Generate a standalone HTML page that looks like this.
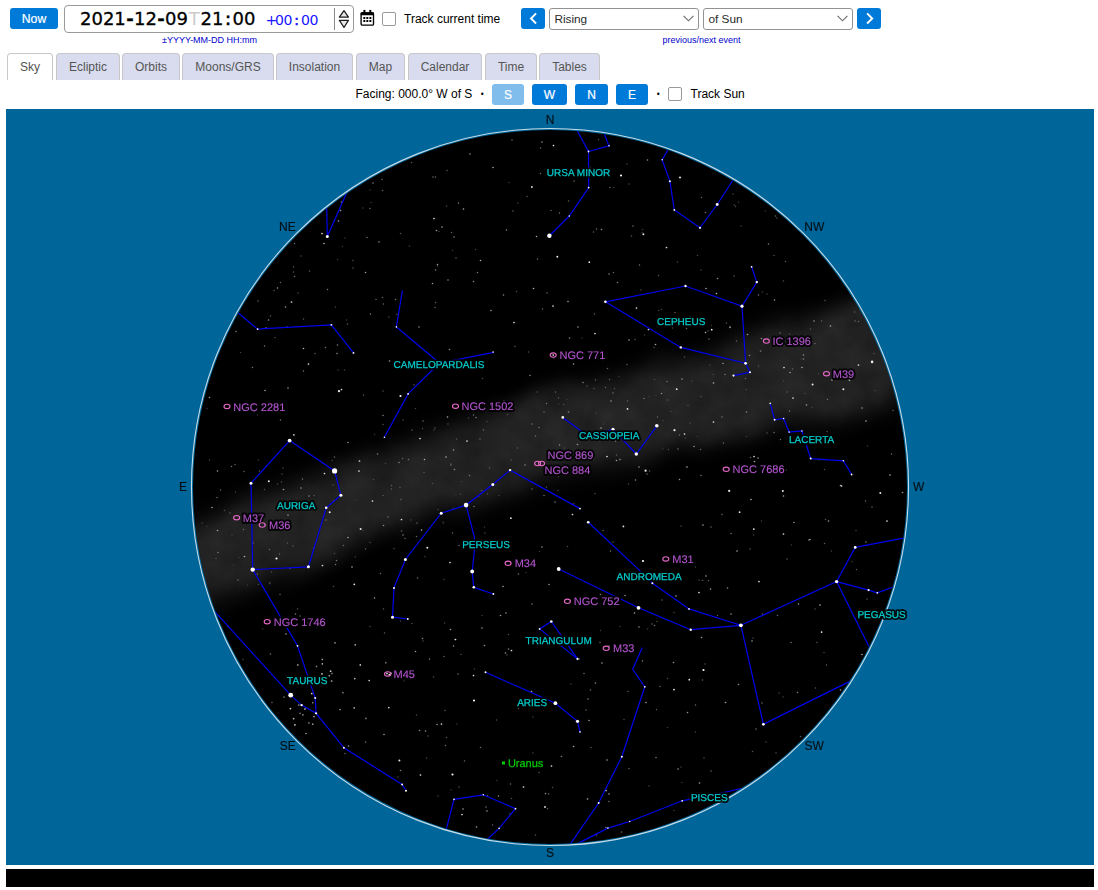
<!DOCTYPE html>
<html lang="en"><head><meta charset="utf-8"><title>Sky View Café</title>
<style>
html,body{margin:0;padding:0;background:#fff;}
body{width:1098px;height:890px;position:relative;overflow:hidden;font-family:"Liberation Sans",sans-serif;font-size:12px;color:#000;}
.abs{position:absolute;white-space:nowrap;}
.btn{position:absolute;background:#007ad9;color:#fff;font-weight:normal;font-size:12px;-webkit-text-stroke:0.2px #fff;border-radius:3px;text-align:center;box-sizing:border-box;}
.tab{position:absolute;top:53px;height:27px;box-sizing:border-box;border:1px solid #c8c8c8;border-bottom:none;border-radius:4px 4px 0 0;background:#d8dcee;color:#555;text-align:center;line-height:26px;font-size:12px;}
.tab.sel{background:#fff;color:#555;}
.cb{position:absolute;width:13.8px;height:13.8px;box-sizing:border-box;border:1.2px solid #999;border-radius:2px;background:#fff;}
.sel1{position:absolute;top:8px;height:22px;box-sizing:border-box;border:1px solid #929292;border-radius:3px;background:#fff;font-size:11.8px;line-height:21px;padding-left:4.4px;color:#2a2a2a;}
.cap{position:absolute;font-size:9px;color:#0000cc;white-space:nowrap;line-height:10px;}
.dt{position:absolute;left:64px;top:5px;width:290px;height:28px;box-sizing:border-box;border:1px solid #999;border-radius:4px;background:#fff;}
.hy{display:inline-block;width:0.454em;text-align:center;}
</style></head><body>
<div class="btn" style="left:10px;top:8px;width:48px;height:21px;line-height:22.5px;font-size:12.2px;">Now</div>
<div class="dt" id="dt">
<div class="abs" id="d1" style="left:15px;top:2px;font-family:'DejaVu Sans',sans-serif;font-size:18px;line-height:22px;color:#000;-webkit-text-stroke:0.3px #000;">2021<span class="hy" style="font-weight:bold">-</span>12<span class="hy" style="font-weight:bold">-</span>09<span class="hy" style="color:#ccc;width:12.6px;-webkit-text-stroke:0">T</span>21<span class="hy" style="width:9px;-webkit-text-stroke:0.7px #000">:</span>00</div>
<div class="abs" id="d2" style="left:200.6px;top:3.5px;font-family:'DejaVu Sans',sans-serif;font-size:14px;line-height:20px;color:#1515ff;letter-spacing:-0.3px"><span class="hy" style="width:9.4px">+</span>00<span class="hy" style="width:8.7px;-webkit-text-stroke:0.6px #1515ff">:</span>00</div>
<div class="abs" style="left:269px;top:2px;width:1px;height:22px;background:#888;"></div>
<svg class="abs" style="left:272px;top:2px" width="16" height="24" viewBox="337 8 16 24"><path d="M344 10.7 L348.4 17.2 H339.4 Z" fill="#e6e6e6" stroke="#1a1a1a" stroke-width="1.25" stroke-linejoin="round"/><path d="M344 27.5 L348.4 20.4 H339.4 Z" fill="#e6e6e6" stroke="#1a1a1a" stroke-width="1.25" stroke-linejoin="round"/></svg>
</div>
<div class="cap" style="left:162px;top:35px;">±YYYY-MM-DD HH:mm</div>
<svg class="abs" style="left:360px;top:9px" width="15" height="18" viewBox="0 0 15 18"><rect x="1.1" y="3.8" width="12.4" height="12.4" rx="1.3" fill="#fff" stroke="#000" stroke-width="1.35"/><rect x="0.6" y="3.2" width="13.4" height="3" rx="0.8" fill="#000"/><rect x="3.4" y="0.9" width="2" height="3" fill="#000"/><rect x="9.3" y="0.9" width="2" height="3" fill="#000"/><g fill="#000"><rect x="3.3" y="7.9" width="2" height="2.1" rx="0.5"/><rect x="6.3" y="7.9" width="2" height="2.1" rx="0.5"/><rect x="9.4" y="7.9" width="2" height="2.1" rx="0.5"/><rect x="3.3" y="10.9" width="2" height="2.1" rx="0.5"/><rect x="6.3" y="10.9" width="2" height="2.1" rx="0.5"/><rect x="9.4" y="10.9" width="2" height="2.1" rx="0.5"/></g></svg>
<div class="cb" style="left:382.1px;top:12.1px;"></div>
<div class="abs" style="left:404px;top:12px;line-height:14px;">Track current time</div>
<div class="btn" style="left:521px;top:8px;width:24px;height:21px;"><svg width="24" height="21" viewBox="0 0 24 21"><path d="M15.1 5.4 L10 10.45 L15.1 15.5" fill="none" stroke="#fff" stroke-width="1.9" stroke-linecap="butt" stroke-linejoin="miter"/></svg></div>
<div class="sel1" style="left:549px;width:150px;">Rising<svg class="abs" style="right:3.7px;top:6px" width="11" height="7" viewBox="0 0 11 7"><path d="M0.6 0.8 L5.5 5.8 L10.4 0.8" fill="none" stroke="#6a6a6a" stroke-width="1.1"/></svg></div>
<div class="sel1" style="left:703px;width:150px;">of Sun<svg class="abs" style="right:3.7px;top:6px" width="11" height="7" viewBox="0 0 11 7"><path d="M0.6 0.8 L5.5 5.8 L10.4 0.8" fill="none" stroke="#6a6a6a" stroke-width="1.1"/></svg></div>
<div class="btn" style="left:857px;top:8px;width:24px;height:21px;"><svg width="24" height="21" viewBox="0 0 24 21"><path d="M10.1 5.4 L15.2 10.45 L10.1 15.5" fill="none" stroke="#fff" stroke-width="1.9" stroke-linecap="butt" stroke-linejoin="miter"/></svg></div>
<div class="cap" style="left:662.5px;top:35px;">previous/next event</div>

<div class="tab sel" style="left:7px;width:46px;">Sky</div>
<div class="tab" style="left:56px;width:64px;">Ecliptic</div>
<div class="tab" style="left:122px;width:58px;">Orbits</div>
<div class="tab" style="left:182px;width:92px;">Moons/GRS</div>
<div class="tab" style="left:276px;width:77px;">Insolation</div>
<div class="tab" style="left:356px;width:49px;">Map</div>
<div class="tab" style="left:408px;width:74px;">Calendar</div>
<div class="tab" style="left:485px;width:52px;">Time</div>
<div class="tab" style="left:539px;width:61px;">Tables</div>

<div class="abs" style="left:355.5px;top:87px;line-height:14px;">Facing: 000.0° W of S</div>
<div class="abs" style="left:480.8px;top:87px;line-height:14px;font-size:8.5px;">•</div>
<div class="btn" style="left:492px;top:84px;width:32px;height:20.5px;line-height:22.5px;background:#80bcec;">S</div>
<div class="btn" style="left:532px;top:84px;width:35px;height:20.5px;line-height:22.5px;">W</div>
<div class="btn" style="left:575px;top:84px;width:33px;height:20.5px;line-height:22.5px;">N</div>
<div class="btn" style="left:616px;top:84px;width:32px;height:20.5px;line-height:22.5px;">E</div>
<div class="abs" style="left:656.8px;top:87px;line-height:14px;font-size:8.5px;">•</div>
<div class="cb" style="left:667.9px;top:87.1px;"></div>
<div class="abs" style="left:690.5px;top:87px;line-height:14px;">Track Sun</div>

<svg width="1088" height="756" viewBox="6 109 1088 756" style="position:absolute;left:6px;top:109px;display:block;will-change:transform">
<defs><clipPath id="cc"><circle cx="550.0" cy="487.0" r="357.0"/></clipPath><filter id="mw" filterUnits="userSpaceOnUse" x="150" y="100" width="800" height="780" color-interpolation-filters="sRGB"><feGaussianBlur in="SourceGraphic" stdDeviation="11" result="b"/><feTurbulence type="fractalNoise" baseFrequency="0.012" numOctaves="2" seed="4" result="t"/><feDisplacementMap in="b" in2="t" scale="26" xChannelSelector="R" yChannelSelector="G" result="d"/><feTurbulence type="fractalNoise" baseFrequency="0.035" numOctaves="3" seed="5" result="n"/><feColorMatrix in="n" type="matrix" values="0 0 0 0 1  0 0 0 0 1  0 0 0 0 1  0.4 0 0 0 0.6" result="na"/><feComposite in="d" in2="na" operator="in"/></filter></defs>
<rect x="6" y="109" width="1088" height="756" fill="#006699"/>
<circle cx="550.0" cy="487.0" r="357.0" fill="#000"/>
<g clip-path="url(#cc)">
<g filter="url(#mw)" opacity="0.17"><polygon points="150,536 230,506.5 450,424 690,355 840,303.5 960,268 960,382 840,418 690,447.5 450,509 230,594 150,624" fill="#fff"/></g>
<circle cx="245" cy="513.5" r="0.75" fill="rgb(60,60,60)"/><circle cx="496.5" cy="720" r="0.75" fill="rgb(76,76,76)"/><circle cx="476.5" cy="827" r="0.8" fill="rgb(161,161,161)"/><circle cx="400.5" cy="233.5" r="0.75" fill="rgb(84,84,84)"/><circle cx="649" cy="396.5" r="0.75" fill="rgb(60,60,60)"/><circle cx="679.5" cy="435" r="0.75" fill="rgb(110,110,110)"/><circle cx="302.5" cy="479" r="0.75" fill="rgb(118,118,118)"/><circle cx="607" cy="456.5" r="0.85" fill="#ddd"/><circle cx="532" cy="604" r="0.8" fill="rgb(120,120,120)"/><circle cx="780" cy="333" r="0.75" fill="rgb(118,118,118)"/><circle cx="209.5" cy="460" r="0.75" fill="rgb(66,66,66)"/><circle cx="285.5" cy="307" r="0.8" fill="rgb(164,164,164)"/><circle cx="810.5" cy="329" r="0.75" fill="rgb(89,89,89)"/><circle cx="301" cy="256" r="0.75" fill="rgb(77,77,77)"/><circle cx="539.5" cy="551.5" r="0.75" fill="rgb(55,55,55)"/><circle cx="634.5" cy="613" r="0.8" fill="rgb(171,171,171)"/><circle cx="473.5" cy="415" r="0.75" fill="rgb(115,115,115)"/><circle cx="342.5" cy="246.5" r="0.75" fill="rgb(59,59,59)"/><circle cx="265" cy="390.5" r="0.8" fill="rgb(165,165,165)"/><circle cx="631.5" cy="236" r="0.75" fill="rgb(88,88,88)"/><circle cx="872" cy="507" r="0.75" fill="rgb(106,106,106)"/><circle cx="212" cy="507.5" r="0.8" fill="rgb(162,162,162)"/><circle cx="690" cy="316.5" r="0.75" fill="rgb(70,70,70)"/><circle cx="355.5" cy="500" r="0.75" fill="rgb(57,57,57)"/><circle cx="875" cy="390.5" r="0.75" fill="rgb(76,76,76)"/><circle cx="476" cy="417.5" r="0.8" fill="rgb(126,126,126)"/><circle cx="443" cy="522" r="0.75" fill="rgb(56,56,56)"/><circle cx="783.5" cy="281" r="0.75" fill="rgb(82,82,82)"/><circle cx="365.5" cy="549" r="0.75" fill="rgb(94,94,94)"/><circle cx="446" cy="457" r="0.8" fill="rgb(173,173,173)"/><circle cx="573.5" cy="504" r="0.75" fill="rgb(96,96,96)"/><circle cx="711" cy="527" r="0.75" fill="rgb(104,104,104)"/><circle cx="590.5" cy="690" r="0.75" fill="rgb(108,108,108)"/><circle cx="509" cy="182.5" r="0.75" fill="rgb(61,61,61)"/><circle cx="435.5" cy="270" r="0.8" fill="rgb(125,125,125)"/><circle cx="207" cy="526.5" r="0.75" fill="rgb(56,56,56)"/><circle cx="268.5" cy="320" r="0.8" fill="rgb(140,140,140)"/><circle cx="600.5" cy="630.5" r="0.75" fill="rgb(60,60,60)"/><circle cx="684.5" cy="434" r="0.85" fill="#ddd"/><circle cx="646" cy="702.5" r="0.8" fill="rgb(160,160,160)"/><circle cx="855" cy="321" r="0.75" fill="rgb(105,105,105)"/><circle cx="363" cy="208" r="0.75" fill="rgb(59,59,59)"/><circle cx="337" cy="353.5" r="0.8" fill="rgb(135,135,135)"/><circle cx="400" cy="487.5" r="0.75" fill="rgb(87,87,87)"/><circle cx="789.5" cy="411" r="0.75" fill="rgb(120,120,120)"/><circle cx="482.5" cy="378.5" r="0.75" fill="rgb(67,67,67)"/><circle cx="243" cy="659.5" r="0.75" fill="rgb(70,70,70)"/><circle cx="815" cy="609" r="0.75" fill="rgb(78,78,78)"/><circle cx="402.5" cy="458.5" r="0.75" fill="rgb(97,97,97)"/><circle cx="887" cy="521" r="0.85" fill="#ddd"/><circle cx="414" cy="385" r="0.75" fill="rgb(91,91,91)"/><circle cx="532" cy="489" r="0.75" fill="rgb(102,102,102)"/><circle cx="257.5" cy="415" r="0.75" fill="rgb(57,57,57)"/><circle cx="704" cy="758" r="0.75" fill="rgb(85,85,85)"/><circle cx="710.5" cy="589" r="0.8" fill="rgb(155,155,155)"/><circle cx="681.5" cy="625.5" r="0.75" fill="rgb(57,57,57)"/><circle cx="288" cy="388" r="0.8" fill="rgb(155,155,155)"/><circle cx="679.5" cy="479.5" r="0.8" fill="rgb(145,145,145)"/><circle cx="373" cy="183" r="0.8" fill="rgb(127,127,127)"/><circle cx="546.5" cy="403.5" r="0.75" fill="rgb(119,119,119)"/><circle cx="598.5" cy="139.5" r="0.75" fill="rgb(80,80,80)"/><circle cx="401" cy="499.5" r="0.75" fill="rgb(99,99,99)"/><circle cx="514" cy="322.5" r="0.85" fill="#ddd"/><circle cx="343.5" cy="545.5" r="0.75" fill="rgb(104,104,104)"/><circle cx="540.5" cy="148" r="0.75" fill="rgb(101,101,101)"/><circle cx="515" cy="346.5" r="0.75" fill="rgb(87,87,87)"/><circle cx="419.5" cy="730.5" r="0.8" fill="rgb(133,133,133)"/><circle cx="400.5" cy="396" r="1.05" fill="#fff"/><circle cx="614.5" cy="388.5" r="0.75" fill="rgb(81,81,81)"/><circle cx="789.5" cy="334" r="0.75" fill="rgb(78,78,78)"/><circle cx="383" cy="495.5" r="0.75" fill="rgb(90,90,90)"/><circle cx="530" cy="375.5" r="0.8" fill="rgb(130,130,130)"/><circle cx="475.5" cy="249.5" r="0.75" fill="rgb(74,74,74)"/><circle cx="840.5" cy="485.5" r="0.8" fill="rgb(173,173,173)"/><circle cx="293.5" cy="267" r="0.75" fill="rgb(87,87,87)"/><circle cx="258" cy="301" r="0.75" fill="rgb(109,109,109)"/><circle cx="826.5" cy="665" r="0.75" fill="rgb(94,94,94)"/><circle cx="567" cy="399.5" r="0.75" fill="rgb(60,60,60)"/><circle cx="283.5" cy="489.5" r="0.8" fill="rgb(162,162,162)"/><circle cx="347.5" cy="324" r="0.75" fill="rgb(92,92,92)"/><circle cx="370" cy="208.5" r="0.75" fill="rgb(104,104,104)"/><circle cx="654" cy="347.5" r="0.75" fill="rgb(78,78,78)"/><circle cx="647.5" cy="629" r="0.75" fill="rgb(61,61,61)"/><circle cx="567.5" cy="546.5" r="0.75" fill="rgb(76,76,76)"/><circle cx="408.5" cy="459.5" r="0.75" fill="rgb(116,116,116)"/><circle cx="824.5" cy="469.5" r="0.75" fill="rgb(78,78,78)"/><circle cx="434" cy="430" r="0.75" fill="rgb(73,73,73)"/><circle cx="416.5" cy="715" r="0.75" fill="rgb(76,76,76)"/><circle cx="736.5" cy="341" r="0.75" fill="rgb(102,102,102)"/><circle cx="327.5" cy="289.5" r="0.75" fill="rgb(118,118,118)"/><circle cx="858.5" cy="365" r="0.85" fill="#ddd"/><circle cx="667.5" cy="400" r="0.75" fill="rgb(86,86,86)"/><circle cx="780.5" cy="439.5" r="0.75" fill="rgb(99,99,99)"/><circle cx="459" cy="787" r="0.75" fill="rgb(89,89,89)"/><circle cx="419" cy="327" r="0.8" fill="rgb(134,134,134)"/><circle cx="545.5" cy="793.5" r="0.8" fill="rgb(146,146,146)"/><circle cx="627" cy="364.5" r="0.75" fill="rgb(89,89,89)"/><circle cx="382.5" cy="190.5" r="0.75" fill="rgb(102,102,102)"/><circle cx="700.5" cy="449.5" r="0.75" fill="rgb(94,94,94)"/><circle cx="798.5" cy="604" r="0.8" fill="rgb(156,156,156)"/><circle cx="403" cy="535" r="0.8" fill="rgb(129,129,129)"/><circle cx="335.5" cy="307" r="0.75" fill="rgb(69,69,69)"/><circle cx="824.5" cy="543.5" r="0.75" fill="rgb(92,92,92)"/><circle cx="902.5" cy="492.5" r="0.8" fill="rgb(148,148,148)"/><circle cx="609" cy="794" r="0.8" fill="rgb(163,163,163)"/><circle cx="619.5" cy="573.5" r="0.75" fill="rgb(90,90,90)"/><circle cx="294.5" cy="276.5" r="0.75" fill="rgb(111,111,111)"/><circle cx="658.5" cy="275.5" r="0.75" fill="rgb(86,86,86)"/><circle cx="677.5" cy="262" r="0.75" fill="rgb(74,74,74)"/><circle cx="761.5" cy="521" r="0.75" fill="rgb(64,64,64)"/><circle cx="690" cy="423" r="0.75" fill="rgb(84,84,84)"/><circle cx="874" cy="353.5" r="0.75" fill="rgb(88,88,88)"/><circle cx="257.5" cy="574" r="0.75" fill="rgb(102,102,102)"/><circle cx="890" cy="475" r="0.8" fill="rgb(178,178,178)"/><circle cx="785.5" cy="261.5" r="0.75" fill="rgb(92,92,92)"/><circle cx="563.5" cy="404.5" r="0.75" fill="rgb(78,78,78)"/><circle cx="711" cy="771" r="0.75" fill="rgb(108,108,108)"/><circle cx="412" cy="430" r="0.75" fill="rgb(95,95,95)"/><circle cx="663" cy="449" r="0.75" fill="rgb(57,57,57)"/><circle cx="635.5" cy="480" r="0.8" fill="rgb(136,136,136)"/><circle cx="750.5" cy="457.5" r="0.75" fill="rgb(99,99,99)"/><circle cx="463" cy="809" r="0.8" fill="rgb(160,160,160)"/><circle cx="552.5" cy="787.5" r="0.75" fill="rgb(79,79,79)"/><circle cx="554" cy="358" r="0.75" fill="rgb(72,72,72)"/><circle cx="678" cy="769" r="0.8" fill="rgb(142,142,142)"/><circle cx="275.5" cy="509.5" r="0.75" fill="rgb(89,89,89)"/><circle cx="474" cy="700.5" r="1.05" fill="#fff"/><circle cx="605.5" cy="387.5" r="0.75" fill="rgb(97,97,97)"/><circle cx="633.5" cy="439" r="0.8" fill="rgb(170,170,170)"/><circle cx="446.5" cy="206" r="0.75" fill="rgb(76,76,76)"/><circle cx="610.5" cy="551" r="0.75" fill="rgb(114,114,114)"/><circle cx="367" cy="237.5" r="0.75" fill="rgb(115,115,115)"/><circle cx="815.5" cy="688" r="0.75" fill="rgb(80,80,80)"/><circle cx="595.5" cy="380" r="0.75" fill="rgb(97,97,97)"/><circle cx="862" cy="654.5" r="0.8" fill="rgb(172,172,172)"/><circle cx="224.5" cy="510.5" r="0.75" fill="rgb(77,77,77)"/><circle cx="202" cy="523" r="0.75" fill="rgb(68,68,68)"/><circle cx="335.5" cy="564.5" r="0.75" fill="rgb(115,115,115)"/><circle cx="774" cy="255.5" r="0.75" fill="rgb(83,83,83)"/><circle cx="752" cy="641" r="0.8" fill="rgb(157,157,157)"/><circle cx="516.5" cy="291.5" r="0.75" fill="rgb(77,77,77)"/><circle cx="383.5" cy="525.5" r="0.8" fill="rgb(142,142,142)"/><circle cx="426.5" cy="758" r="0.75" fill="rgb(77,77,77)"/><circle cx="600" cy="350.5" r="0.75" fill="rgb(114,114,114)"/><circle cx="439" cy="231.5" r="0.75" fill="rgb(58,58,58)"/><circle cx="340.5" cy="210.5" r="0.8" fill="rgb(158,158,158)"/><circle cx="644.5" cy="335" r="0.75" fill="rgb(64,64,64)"/><circle cx="734" cy="276" r="0.75" fill="rgb(95,95,95)"/><circle cx="745.5" cy="378.5" r="0.75" fill="rgb(106,106,106)"/><circle cx="348.5" cy="746" r="0.8" fill="rgb(151,151,151)"/><circle cx="441.5" cy="724" r="0.85" fill="#ddd"/><circle cx="447.5" cy="417" r="0.8" fill="rgb(169,169,169)"/><circle cx="464.5" cy="761" r="0.75" fill="rgb(98,98,98)"/><circle cx="654.5" cy="379.5" r="0.75" fill="rgb(69,69,69)"/><circle cx="825" cy="300.5" r="0.75" fill="rgb(83,83,83)"/><circle cx="695.5" cy="732" r="0.75" fill="rgb(69,69,69)"/><circle cx="308.5" cy="364" r="0.85" fill="#ddd"/><circle cx="333.5" cy="586.5" r="0.75" fill="rgb(74,74,74)"/><circle cx="470" cy="154" r="0.8" fill="rgb(143,143,143)"/><circle cx="702.5" cy="580.5" r="0.75" fill="rgb(95,95,95)"/><circle cx="518.5" cy="574" r="0.75" fill="rgb(119,119,119)"/><circle cx="660" cy="686.5" r="0.75" fill="rgb(101,101,101)"/><circle cx="865.5" cy="501" r="0.75" fill="rgb(109,109,109)"/><circle cx="486" cy="807" r="0.75" fill="rgb(120,120,120)"/><circle cx="473.5" cy="675.5" r="0.85" fill="#ddd"/><circle cx="447" cy="170.5" r="0.75" fill="rgb(92,92,92)"/><circle cx="692" cy="381" r="0.75" fill="rgb(76,76,76)"/><circle cx="473.5" cy="281.5" r="0.8" fill="rgb(139,139,139)"/><circle cx="776.5" cy="464.5" r="0.75" fill="rgb(107,107,107)"/><circle cx="446.5" cy="737.5" r="0.75" fill="rgb(90,90,90)"/><circle cx="374.5" cy="434.5" r="0.75" fill="rgb(55,55,55)"/><circle cx="708" cy="331" r="0.75" fill="rgb(83,83,83)"/><circle cx="535.5" cy="436" r="0.75" fill="rgb(117,117,117)"/><circle cx="840.5" cy="690" r="0.8" fill="rgb(154,154,154)"/><circle cx="661.5" cy="309.5" r="0.75" fill="rgb(68,68,68)"/><circle cx="723.5" cy="443" r="0.75" fill="rgb(107,107,107)"/><circle cx="382.5" cy="297.5" r="0.75" fill="rgb(101,101,101)"/><circle cx="235" cy="464.5" r="0.75" fill="rgb(101,101,101)"/><circle cx="793" cy="398" r="0.85" fill="#ddd"/><circle cx="247.5" cy="585" r="0.75" fill="rgb(57,57,57)"/><circle cx="558.5" cy="476.5" r="0.75" fill="rgb(58,58,58)"/><circle cx="706" cy="576" r="0.8" fill="rgb(162,162,162)"/><circle cx="454.5" cy="469.5" r="0.8" fill="rgb(138,138,138)"/><circle cx="589" cy="720.5" r="0.8" fill="rgb(153,153,153)"/><circle cx="481.5" cy="490.5" r="0.75" fill="rgb(103,103,103)"/><circle cx="758.5" cy="366" r="0.75" fill="rgb(83,83,83)"/><circle cx="825.5" cy="519.5" r="0.75" fill="rgb(83,83,83)"/><circle cx="738.5" cy="202" r="0.75" fill="rgb(58,58,58)"/><circle cx="661.5" cy="393.5" r="0.8" fill="rgb(142,142,142)"/><circle cx="594.5" cy="314" r="0.75" fill="rgb(95,95,95)"/><circle cx="420" cy="438.5" r="0.85" fill="#ddd"/><circle cx="232" cy="535" r="0.75" fill="rgb(66,66,66)"/><circle cx="512" cy="140" r="0.75" fill="rgb(111,111,111)"/><circle cx="532" cy="424" r="0.75" fill="rgb(116,116,116)"/><circle cx="345" cy="238" r="0.75" fill="rgb(55,55,55)"/><circle cx="415.5" cy="651.5" r="0.8" fill="rgb(161,161,161)"/><circle cx="540.5" cy="173.5" r="0.75" fill="rgb(109,109,109)"/><circle cx="506" cy="613" r="0.8" fill="rgb(145,145,145)"/><circle cx="491" cy="405.5" r="0.85" fill="#ddd"/><circle cx="753.5" cy="535" r="0.75" fill="rgb(60,60,60)"/><circle cx="784" cy="367.5" r="0.85" fill="#ddd"/><circle cx="787" cy="559" r="0.75" fill="rgb(95,95,95)"/><circle cx="827.5" cy="399.5" r="0.75" fill="rgb(112,112,112)"/><circle cx="682" cy="782.5" r="0.75" fill="rgb(63,63,63)"/><circle cx="588" cy="699" r="0.8" fill="rgb(133,133,133)"/><circle cx="758" cy="458" r="0.8" fill="rgb(147,147,147)"/><circle cx="566.5" cy="470" r="0.75" fill="rgb(72,72,72)"/><circle cx="452.5" cy="533" r="0.75" fill="rgb(104,104,104)"/><circle cx="269.5" cy="582.5" r="0.75" fill="rgb(69,69,69)"/><circle cx="619" cy="376.5" r="0.75" fill="rgb(56,56,56)"/><circle cx="337.5" cy="259.5" r="0.75" fill="rgb(59,59,59)"/><circle cx="239" cy="557.5" r="0.75" fill="rgb(66,66,66)"/><circle cx="671" cy="411.5" r="0.75" fill="rgb(70,70,70)"/><circle cx="734.5" cy="205" r="0.75" fill="rgb(79,79,79)"/><circle cx="282" cy="474" r="0.75" fill="rgb(77,77,77)"/><circle cx="295.5" cy="614" r="0.8" fill="rgb(124,124,124)"/><circle cx="642" cy="232.5" r="0.75" fill="rgb(60,60,60)"/><circle cx="703" cy="525" r="0.8" fill="rgb(164,164,164)"/><circle cx="383" cy="424.5" r="0.75" fill="rgb(80,80,80)"/><circle cx="792.5" cy="369" r="0.75" fill="rgb(101,101,101)"/><circle cx="420.5" cy="775" r="0.85" fill="#ddd"/><circle cx="397" cy="314.5" r="0.75" fill="rgb(89,89,89)"/><circle cx="400.5" cy="770.5" r="0.8" fill="rgb(126,126,126)"/><circle cx="436.5" cy="230.5" r="0.8" fill="rgb(154,154,154)"/><circle cx="601.5" cy="229.5" r="0.8" fill="rgb(138,138,138)"/><circle cx="701" cy="270" r="0.75" fill="rgb(63,63,63)"/><circle cx="628.5" cy="484" r="0.75" fill="rgb(74,74,74)"/><circle cx="609" cy="274" r="0.8" fill="rgb(128,128,128)"/><circle cx="484.5" cy="645.5" r="0.8" fill="rgb(148,148,148)"/><circle cx="533" cy="753" r="0.75" fill="rgb(72,72,72)"/><circle cx="787" cy="392" r="0.75" fill="rgb(90,90,90)"/><circle cx="564" cy="448" r="0.75" fill="rgb(66,66,66)"/><circle cx="422.5" cy="638.5" r="0.8" fill="rgb(133,133,133)"/><circle cx="572.5" cy="514.5" r="0.85" fill="#ddd"/><circle cx="353" cy="260.5" r="0.75" fill="rgb(78,78,78)"/><circle cx="262.5" cy="629" r="0.75" fill="rgb(56,56,56)"/><circle cx="281.5" cy="482" r="0.75" fill="rgb(81,81,81)"/><circle cx="280.5" cy="420" r="0.75" fill="rgb(111,111,111)"/><circle cx="602" cy="663" r="0.8" fill="rgb(152,152,152)"/><circle cx="862" cy="408" r="0.8" fill="rgb(156,156,156)"/><circle cx="568.5" cy="412" r="0.8" fill="rgb(139,139,139)"/><circle cx="435.5" cy="302.5" r="0.75" fill="rgb(96,96,96)"/><circle cx="453.5" cy="509" r="0.75" fill="rgb(96,96,96)"/><circle cx="553.5" cy="145.5" r="0.85" fill="#ddd"/><circle cx="388" cy="517" r="0.75" fill="rgb(114,114,114)"/><circle cx="372.5" cy="501" r="0.85" fill="#ddd"/><circle cx="279.5" cy="554" r="0.75" fill="rgb(103,103,103)"/><circle cx="385.5" cy="463.5" r="0.75" fill="rgb(69,69,69)"/><circle cx="403" cy="420" r="0.75" fill="rgb(78,78,78)"/><circle cx="256.5" cy="520" r="0.75" fill="rgb(112,112,112)"/><circle cx="600.5" cy="594.5" r="0.8" fill="rgb(122,122,122)"/><circle cx="528.5" cy="352" r="0.75" fill="rgb(76,76,76)"/><circle cx="559" cy="404" r="0.75" fill="rgb(56,56,56)"/><circle cx="445.5" cy="745.5" r="0.75" fill="rgb(107,107,107)"/><circle cx="404" cy="681" r="0.75" fill="rgb(61,61,61)"/><circle cx="815" cy="444" r="0.75" fill="rgb(91,91,91)"/><circle cx="507" cy="655" r="0.75" fill="rgb(76,76,76)"/><circle cx="303.5" cy="371" r="0.75" fill="rgb(119,119,119)"/><circle cx="699.5" cy="783" r="0.8" fill="rgb(164,164,164)"/><circle cx="601" cy="428" r="0.8" fill="rgb(164,164,164)"/><circle cx="627.5" cy="401" r="0.75" fill="rgb(98,98,98)"/><circle cx="709" cy="339" r="0.75" fill="rgb(107,107,107)"/><circle cx="325.5" cy="347.5" r="0.75" fill="rgb(109,109,109)"/><circle cx="497" cy="780.5" r="0.75" fill="rgb(59,59,59)"/><circle cx="568.5" cy="201" r="0.75" fill="rgb(93,93,93)"/><circle cx="438" cy="509.5" r="0.75" fill="rgb(71,71,71)"/><circle cx="783.5" cy="496" r="0.8" fill="rgb(170,170,170)"/><circle cx="827" cy="431.5" r="0.75" fill="rgb(82,82,82)"/><circle cx="558" cy="490.5" r="0.75" fill="rgb(72,72,72)"/><circle cx="643" cy="561" r="1.05" fill="#fff"/><circle cx="647.5" cy="160" r="0.8" fill="rgb(142,142,142)"/><circle cx="412" cy="623.5" r="0.75" fill="rgb(83,83,83)"/><circle cx="333" cy="485" r="0.75" fill="rgb(80,80,80)"/><circle cx="603.5" cy="424" r="0.75" fill="rgb(69,69,69)"/><circle cx="735.5" cy="206.5" r="0.75" fill="rgb(71,71,71)"/><circle cx="423" cy="641" r="0.75" fill="rgb(71,71,71)"/><circle cx="609.5" cy="379.5" r="0.75" fill="rgb(91,91,91)"/><circle cx="636.5" cy="308" r="0.85" fill="#ddd"/><circle cx="803.5" cy="355" r="0.8" fill="rgb(150,150,150)"/><circle cx="547.5" cy="808.5" r="0.75" fill="rgb(92,92,92)"/><circle cx="706" cy="288.5" r="0.8" fill="rgb(165,165,165)"/><circle cx="539.5" cy="696.5" r="0.75" fill="rgb(71,71,71)"/><circle cx="401.5" cy="531" r="0.75" fill="rgb(105,105,105)"/><circle cx="468.5" cy="418" r="0.75" fill="rgb(66,66,66)"/><circle cx="783.5" cy="381" r="0.75" fill="rgb(73,73,73)"/><circle cx="395.5" cy="299.5" r="0.75" fill="rgb(118,118,118)"/><circle cx="768.5" cy="244" r="0.8" fill="rgb(125,125,125)"/><circle cx="462" cy="814.5" r="0.85" fill="#ddd"/><circle cx="286" cy="634" r="0.8" fill="rgb(171,171,171)"/><circle cx="613" cy="393" r="0.75" fill="rgb(112,112,112)"/><circle cx="345" cy="753.5" r="0.75" fill="rgb(103,103,103)"/><circle cx="415.5" cy="408.5" r="0.75" fill="rgb(71,71,71)"/><circle cx="801" cy="359" r="0.75" fill="rgb(65,65,65)"/><circle cx="594" cy="388.5" r="0.75" fill="rgb(83,83,83)"/><circle cx="240.5" cy="352.5" r="0.75" fill="rgb(66,66,66)"/><circle cx="705.5" cy="332.5" r="0.8" fill="rgb(174,174,174)"/><circle cx="287" cy="327" r="0.75" fill="rgb(119,119,119)"/><circle cx="667" cy="381.5" r="0.75" fill="rgb(117,117,117)"/><circle cx="444" cy="579.5" r="0.75" fill="rgb(65,65,65)"/><circle cx="309.5" cy="271" r="0.75" fill="rgb(91,91,91)"/><circle cx="600" cy="642.5" r="0.75" fill="rgb(96,96,96)"/><circle cx="682" cy="379" r="0.8" fill="rgb(154,154,154)"/><circle cx="747.5" cy="334.5" r="0.8" fill="rgb(160,160,160)"/><circle cx="627" cy="164" r="0.75" fill="rgb(65,65,65)"/><circle cx="499" cy="495.5" r="0.75" fill="rgb(67,67,67)"/><circle cx="695.5" cy="705" r="0.75" fill="rgb(106,106,106)"/><circle cx="448" cy="424" r="0.75" fill="rgb(84,84,84)"/><circle cx="511.5" cy="798.5" r="0.75" fill="rgb(83,83,83)"/><circle cx="584" cy="673.5" r="0.75" fill="rgb(118,118,118)"/><circle cx="620" cy="459.5" r="0.8" fill="rgb(154,154,154)"/><circle cx="275" cy="337.5" r="0.75" fill="rgb(74,74,74)"/><circle cx="236" cy="331.5" r="0.8" fill="rgb(120,120,120)"/><circle cx="513" cy="211" r="0.75" fill="rgb(99,99,99)"/><circle cx="452.5" cy="250.5" r="0.75" fill="rgb(56,56,56)"/><circle cx="659" cy="310.5" r="0.75" fill="rgb(68,68,68)"/><circle cx="792" cy="342.5" r="0.75" fill="rgb(115,115,115)"/><circle cx="723" cy="363.5" r="0.8" fill="rgb(152,152,152)"/><circle cx="457" cy="724" r="0.75" fill="rgb(58,58,58)"/><circle cx="546.5" cy="487" r="0.75" fill="rgb(83,83,83)"/><circle cx="595.5" cy="379.5" r="0.75" fill="rgb(63,63,63)"/><circle cx="424.5" cy="459.5" r="0.8" fill="rgb(174,174,174)"/><circle cx="405" cy="538.5" r="0.75" fill="rgb(100,100,100)"/><circle cx="655.5" cy="344.5" r="0.8" fill="rgb(168,168,168)"/><circle cx="678" cy="449" r="0.75" fill="rgb(117,117,117)"/><circle cx="459" cy="545.5" r="0.75" fill="rgb(105,105,105)"/><circle cx="596" cy="413" r="0.75" fill="rgb(72,72,72)"/><circle cx="828.5" cy="521" r="0.8" fill="rgb(162,162,162)"/><circle cx="373.5" cy="479.5" r="0.75" fill="rgb(76,76,76)"/><circle cx="613.5" cy="187.5" r="0.75" fill="rgb(61,61,61)"/><circle cx="703.5" cy="670" r="1.05" fill="#fff"/><circle cx="595.5" cy="683" r="0.8" fill="rgb(139,139,139)"/><circle cx="617.5" cy="282.5" r="0.8" fill="rgb(121,121,121)"/><circle cx="725" cy="374.5" r="0.75" fill="rgb(119,119,119)"/><circle cx="675" cy="312.5" r="0.75" fill="rgb(97,97,97)"/><circle cx="791.5" cy="545" r="0.75" fill="rgb(56,56,56)"/><circle cx="272" cy="702.5" r="0.75" fill="rgb(107,107,107)"/><circle cx="400.5" cy="621" r="0.75" fill="rgb(68,68,68)"/><circle cx="301" cy="488" r="0.8" fill="rgb(146,146,146)"/><circle cx="777.5" cy="615.5" r="0.75" fill="rgb(100,100,100)"/><circle cx="306" cy="733.5" r="0.8" fill="rgb(164,164,164)"/><circle cx="629" cy="184" r="0.75" fill="rgb(75,75,75)"/><circle cx="831.5" cy="551" r="0.75" fill="rgb(71,71,71)"/><circle cx="451" cy="464" r="0.75" fill="rgb(91,91,91)"/><circle cx="607.5" cy="368.5" r="0.75" fill="rgb(98,98,98)"/><circle cx="297.5" cy="609" r="0.75" fill="rgb(80,80,80)"/><circle cx="217.5" cy="530.5" r="0.8" fill="rgb(164,164,164)"/><circle cx="443.5" cy="523" r="0.75" fill="rgb(60,60,60)"/><circle cx="537" cy="392" r="0.75" fill="rgb(77,77,77)"/><circle cx="442" cy="227" r="0.8" fill="rgb(164,164,164)"/><circle cx="517.5" cy="448" r="0.75" fill="rgb(83,83,83)"/><circle cx="587.5" cy="799" r="0.8" fill="rgb(177,177,177)"/><circle cx="610" cy="187.5" r="0.75" fill="rgb(110,110,110)"/><circle cx="746.5" cy="436.5" r="0.75" fill="rgb(61,61,61)"/><circle cx="539" cy="772.5" r="0.75" fill="rgb(79,79,79)"/><circle cx="384.5" cy="633" r="0.75" fill="rgb(92,92,92)"/><circle cx="336.5" cy="560.5" r="0.75" fill="rgb(116,116,116)"/><circle cx="818.5" cy="374" r="0.75" fill="rgb(72,72,72)"/><circle cx="482" cy="615.5" r="0.75" fill="rgb(60,60,60)"/><circle cx="432.5" cy="483.5" r="0.75" fill="rgb(79,79,79)"/><circle cx="596.5" cy="835" r="0.75" fill="rgb(113,113,113)"/><circle cx="710" cy="365" r="0.75" fill="rgb(69,69,69)"/><circle cx="774" cy="432.5" r="0.75" fill="rgb(110,110,110)"/><circle cx="429.5" cy="659" r="0.8" fill="rgb(122,122,122)"/><circle cx="738.5" cy="684.5" r="0.8" fill="rgb(138,138,138)"/><circle cx="891.5" cy="454" r="0.75" fill="rgb(104,104,104)"/><circle cx="746" cy="389.5" r="0.75" fill="rgb(76,76,76)"/><circle cx="733" cy="194" r="0.75" fill="rgb(67,67,67)"/><circle cx="454" cy="237" r="0.8" fill="rgb(129,129,129)"/><circle cx="549" cy="584.5" r="0.8" fill="rgb(146,146,146)"/><circle cx="270.5" cy="654" r="0.75" fill="rgb(116,116,116)"/><circle cx="480.5" cy="747.5" r="0.75" fill="rgb(108,108,108)"/><circle cx="641" cy="290" r="0.75" fill="rgb(79,79,79)"/><circle cx="503.5" cy="295" r="0.8" fill="rgb(135,135,135)"/><circle cx="348" cy="537.5" r="0.8" fill="rgb(162,162,162)"/><circle cx="814" cy="321" r="0.8" fill="rgb(151,151,151)"/><circle cx="607" cy="760" r="0.8" fill="rgb(167,167,167)"/><circle cx="313" cy="617.5" r="0.75" fill="rgb(87,87,87)"/><circle cx="220.5" cy="490" r="0.75" fill="rgb(95,95,95)"/><circle cx="321" cy="619.5" r="0.8" fill="rgb(129,129,129)"/><circle cx="551" cy="210.5" r="0.75" fill="rgb(102,102,102)"/><circle cx="849.5" cy="380" r="0.85" fill="#ddd"/><circle cx="824" cy="652.5" r="0.75" fill="rgb(71,71,71)"/><circle cx="382" cy="179.5" r="0.75" fill="rgb(103,103,103)"/><circle cx="484.5" cy="527" r="0.75" fill="rgb(56,56,56)"/><circle cx="817" cy="642.5" r="0.75" fill="rgb(85,85,85)"/><circle cx="492.5" cy="825" r="0.75" fill="rgb(91,91,91)"/><circle cx="854.5" cy="312" r="0.75" fill="rgb(90,90,90)"/><circle cx="365.5" cy="272.5" r="0.8" fill="rgb(157,157,157)"/><circle cx="228" cy="626.5" r="0.75" fill="rgb(116,116,116)"/><circle cx="642.5" cy="661" r="0.8" fill="rgb(123,123,123)"/><circle cx="474" cy="506.5" r="0.75" fill="rgb(119,119,119)"/><circle cx="352" cy="567" r="0.8" fill="rgb(174,174,174)"/><circle cx="533.5" cy="288.5" r="0.8" fill="rgb(179,179,179)"/><circle cx="774.5" cy="300" r="0.8" fill="rgb(151,151,151)"/><circle cx="777" cy="218" r="0.75" fill="rgb(78,78,78)"/><circle cx="565" cy="453.5" r="0.75" fill="rgb(92,92,92)"/><circle cx="514.5" cy="472.5" r="0.8" fill="rgb(135,135,135)"/><circle cx="300" cy="616" r="0.75" fill="rgb(104,104,104)"/><circle cx="363.5" cy="395" r="0.75" fill="rgb(91,91,91)"/><circle cx="600.5" cy="171.5" r="0.8" fill="rgb(124,124,124)"/><circle cx="389.5" cy="361" r="0.8" fill="rgb(154,154,154)"/><circle cx="258.5" cy="584.5" r="0.75" fill="rgb(74,74,74)"/><circle cx="455" cy="639.5" r="0.75" fill="rgb(93,93,93)"/><circle cx="656.5" cy="709.5" r="0.75" fill="rgb(91,91,91)"/><circle cx="606" cy="790.5" r="0.85" fill="#ddd"/><circle cx="701" cy="396.5" r="0.75" fill="rgb(86,86,86)"/><circle cx="464.5" cy="505.5" r="0.8" fill="rgb(172,172,172)"/><circle cx="616.5" cy="460.5" r="0.8" fill="rgb(156,156,156)"/><circle cx="489.5" cy="468" r="0.75" fill="rgb(96,96,96)"/><circle cx="544" cy="495.5" r="0.75" fill="rgb(118,118,118)"/><circle cx="722" cy="417" r="0.75" fill="rgb(119,119,119)"/><circle cx="277.5" cy="288" r="0.8" fill="rgb(150,150,150)"/><circle cx="731" cy="533.5" r="0.75" fill="rgb(119,119,119)"/><circle cx="701" cy="475.5" r="0.75" fill="rgb(120,120,120)"/><circle cx="776" cy="753" r="0.75" fill="rgb(86,86,86)"/><circle cx="389" cy="317" r="0.75" fill="rgb(79,79,79)"/><circle cx="493" cy="167.5" r="0.8" fill="rgb(163,163,163)"/><circle cx="766" cy="742" r="0.75" fill="rgb(74,74,74)"/><circle cx="230" cy="513" r="0.75" fill="rgb(99,99,99)"/><circle cx="542" cy="547" r="0.8" fill="rgb(146,146,146)"/><circle cx="590" cy="167.5" r="0.75" fill="rgb(105,105,105)"/><circle cx="485" cy="533" r="0.75" fill="rgb(80,80,80)"/><circle cx="761.5" cy="338.5" r="0.8" fill="rgb(146,146,146)"/><circle cx="616.5" cy="455" r="0.75" fill="rgb(97,97,97)"/><circle cx="503" cy="586.5" r="0.8" fill="rgb(162,162,162)"/><circle cx="244.5" cy="556.5" r="0.8" fill="rgb(177,177,177)"/><circle cx="674" cy="612.5" r="0.75" fill="rgb(75,75,75)"/><circle cx="341.5" cy="202" r="0.8" fill="rgb(141,141,141)"/><circle cx="790.5" cy="340" r="0.75" fill="rgb(110,110,110)"/><circle cx="421.5" cy="530" r="0.8" fill="rgb(175,175,175)"/><circle cx="425.5" cy="731" r="0.8" fill="rgb(145,145,145)"/><circle cx="893" cy="410.5" r="0.75" fill="rgb(91,91,91)"/><circle cx="500.5" cy="615.5" r="0.8" fill="rgb(153,153,153)"/><circle cx="569.5" cy="338" r="0.8" fill="rgb(133,133,133)"/><circle cx="548.5" cy="794" r="0.75" fill="rgb(101,101,101)"/><circle cx="216" cy="558.5" r="0.75" fill="rgb(87,87,87)"/><circle cx="867" cy="599" r="0.75" fill="rgb(86,86,86)"/><circle cx="243.5" cy="529.5" r="0.75" fill="rgb(107,107,107)"/><circle cx="217" cy="497.5" r="0.75" fill="rgb(116,116,116)"/><circle cx="287.5" cy="543" r="0.75" fill="rgb(90,90,90)"/><circle cx="666.5" cy="247.5" r="0.85" fill="#ddd"/><circle cx="536.5" cy="236.5" r="0.8" fill="rgb(166,166,166)"/><circle cx="277.5" cy="484" r="0.75" fill="rgb(66,66,66)"/><circle cx="555.5" cy="392" r="0.75" fill="rgb(93,93,93)"/><circle cx="338.5" cy="221" r="0.8" fill="rgb(164,164,164)"/><circle cx="551.5" cy="766" r="0.85" fill="#ddd"/><circle cx="303.5" cy="319" r="0.75" fill="rgb(92,92,92)"/><circle cx="253" cy="543" r="0.75" fill="rgb(111,111,111)"/><circle cx="753" cy="638" r="0.75" fill="rgb(78,78,78)"/><circle cx="621.5" cy="832" r="0.75" fill="rgb(113,113,113)"/><circle cx="687.5" cy="712.5" r="0.8" fill="rgb(148,148,148)"/><circle cx="523.5" cy="787" r="0.85" fill="#ddd"/><circle cx="487" cy="421.5" r="0.75" fill="rgb(78,78,78)"/><circle cx="717.5" cy="615.5" r="0.75" fill="rgb(87,87,87)"/><circle cx="293.5" cy="272" r="0.75" fill="rgb(86,86,86)"/><circle cx="797.5" cy="692.5" r="0.8" fill="rgb(124,124,124)"/><circle cx="673.5" cy="662.5" r="0.8" fill="rgb(153,153,153)"/><circle cx="615.5" cy="441" r="0.8" fill="rgb(141,141,141)"/><circle cx="815" cy="343.5" r="0.75" fill="rgb(105,105,105)"/><circle cx="334.5" cy="457" r="0.75" fill="rgb(101,101,101)"/><circle cx="790" cy="372.5" r="0.8" fill="rgb(155,155,155)"/><circle cx="542" cy="142" r="0.8" fill="rgb(149,149,149)"/><circle cx="432.5" cy="283.5" r="0.8" fill="rgb(157,157,157)"/><circle cx="635" cy="339.5" r="0.75" fill="rgb(80,80,80)"/><circle cx="694" cy="446.5" r="0.8" fill="rgb(147,147,147)"/><circle cx="279.5" cy="618.5" r="0.8" fill="rgb(151,151,151)"/><circle cx="629" cy="768.5" r="0.75" fill="rgb(102,102,102)"/><circle cx="518.5" cy="708.5" r="0.75" fill="rgb(88,88,88)"/><circle cx="265.5" cy="525" r="0.75" fill="rgb(103,103,103)"/><circle cx="510" cy="814" r="0.75" fill="rgb(117,117,117)"/><circle cx="644" cy="398.5" r="0.75" fill="rgb(119,119,119)"/><circle cx="841.5" cy="486" r="0.85" fill="#ddd"/><circle cx="613" cy="542" r="0.75" fill="rgb(92,92,92)"/><circle cx="727.5" cy="588" r="0.8" fill="rgb(136,136,136)"/><circle cx="401.5" cy="519.5" r="0.85" fill="#ddd"/><circle cx="686.5" cy="328.5" r="0.75" fill="rgb(109,109,109)"/><circle cx="783" cy="697" r="0.75" fill="rgb(68,68,68)"/><circle cx="561.5" cy="756.5" r="0.8" fill="rgb(129,129,129)"/><circle cx="315" cy="353.5" r="0.75" fill="rgb(83,83,83)"/><circle cx="270.5" cy="316" r="0.75" fill="rgb(91,91,91)"/><circle cx="749.5" cy="355.5" r="0.8" fill="rgb(134,134,134)"/><circle cx="730" cy="327.5" r="0.8" fill="rgb(176,176,176)"/><circle cx="783.5" cy="534" r="0.85" fill="#ddd"/><circle cx="383.5" cy="304" r="0.75" fill="rgb(107,107,107)"/><circle cx="731" cy="614" r="0.8" fill="rgb(148,148,148)"/><circle cx="746.5" cy="412" r="0.8" fill="rgb(131,131,131)"/><circle cx="435.5" cy="177" r="0.75" fill="rgb(102,102,102)"/><circle cx="481.5" cy="540.5" r="0.8" fill="rgb(157,157,157)"/><circle cx="756" cy="729" r="0.75" fill="rgb(118,118,118)"/><circle cx="656" cy="757.5" r="0.8" fill="rgb(121,121,121)"/><circle cx="695.5" cy="567" r="0.75" fill="rgb(61,61,61)"/><circle cx="624" cy="719.5" r="0.75" fill="rgb(75,75,75)"/><circle cx="450.5" cy="629.5" r="0.8" fill="rgb(156,156,156)"/><circle cx="642.5" cy="229.5" r="0.75" fill="rgb(60,60,60)"/><circle cx="238" cy="580" r="0.75" fill="rgb(110,110,110)"/><circle cx="479" cy="496" r="0.75" fill="rgb(76,76,76)"/><circle cx="244" cy="471.5" r="0.75" fill="rgb(98,98,98)"/><circle cx="437.5" cy="266" r="0.75" fill="rgb(81,81,81)"/><circle cx="708.5" cy="580.5" r="0.75" fill="rgb(88,88,88)"/><circle cx="411.5" cy="162.5" r="0.75" fill="rgb(88,88,88)"/><circle cx="518" cy="203" r="0.75" fill="rgb(69,69,69)"/><circle cx="533" cy="717" r="0.75" fill="rgb(65,65,65)"/><circle cx="595" cy="493.5" r="0.75" fill="rgb(78,78,78)"/><circle cx="505.5" cy="653" r="0.8" fill="rgb(149,149,149)"/><circle cx="611" cy="401" r="0.8" fill="rgb(153,153,153)"/><circle cx="754.5" cy="461.5" r="0.8" fill="rgb(169,169,169)"/><circle cx="574" cy="181" r="0.75" fill="rgb(114,114,114)"/><circle cx="231.5" cy="466.5" r="0.75" fill="rgb(118,118,118)"/><circle cx="687" cy="467" r="0.8" fill="rgb(174,174,174)"/><circle cx="621" cy="175.5" r="1.05" fill="#fff"/><circle cx="649" cy="786" r="0.75" fill="rgb(69,69,69)"/><circle cx="309" cy="496" r="0.8" fill="rgb(142,142,142)"/><circle cx="582" cy="338" r="0.75" fill="rgb(55,55,55)"/><circle cx="280" cy="594.5" r="0.75" fill="rgb(95,95,95)"/><circle cx="583" cy="382.5" r="0.8" fill="rgb(127,127,127)"/><circle cx="800.5" cy="736.5" r="0.75" fill="rgb(89,89,89)"/><circle cx="409.5" cy="674" r="0.75" fill="rgb(112,112,112)"/><circle cx="564.5" cy="455.5" r="0.75" fill="rgb(113,113,113)"/><circle cx="791" cy="642.5" r="0.75" fill="rgb(119,119,119)"/><circle cx="508.5" cy="634.5" r="0.75" fill="rgb(83,83,83)"/><circle cx="442" cy="362" r="0.75" fill="rgb(97,97,97)"/><circle cx="730" cy="326.5" r="0.75" fill="rgb(94,94,94)"/><circle cx="417.5" cy="578" r="0.75" fill="rgb(106,106,106)"/><circle cx="398" cy="777" r="0.75" fill="rgb(79,79,79)"/><circle cx="370.5" cy="314" r="0.75" fill="rgb(120,120,120)"/><circle cx="620" cy="626.5" r="0.75" fill="rgb(61,61,61)"/><circle cx="451.5" cy="232.5" r="0.75" fill="rgb(101,101,101)"/><circle cx="264.5" cy="346" r="0.75" fill="rgb(120,120,120)"/><circle cx="511.5" cy="650.5" r="0.85" fill="#ddd"/><circle cx="437" cy="724.5" r="0.8" fill="rgb(153,153,153)"/><circle cx="672.5" cy="328" r="0.75" fill="rgb(73,73,73)"/><circle cx="322" cy="233.5" r="0.85" fill="#ddd"/><circle cx="453.5" cy="646" r="0.8" fill="rgb(142,142,142)"/><circle cx="353" cy="268" r="0.75" fill="rgb(91,91,91)"/><circle cx="667.5" cy="727.5" r="0.75" fill="rgb(57,57,57)"/><circle cx="701.5" cy="197.5" r="0.75" fill="rgb(100,100,100)"/><circle cx="451" cy="465" r="0.75" fill="rgb(107,107,107)"/><circle cx="568" cy="301.5" r="0.8" fill="rgb(162,162,162)"/><circle cx="537.5" cy="259" r="0.75" fill="rgb(117,117,117)"/><circle cx="722" cy="514.5" r="0.75" fill="rgb(102,102,102)"/><circle cx="625" cy="595.5" r="0.8" fill="rgb(146,146,146)"/><circle cx="805" cy="393.5" r="0.75" fill="rgb(72,72,72)"/><circle cx="355.5" cy="557" r="0.75" fill="rgb(62,62,62)"/><circle cx="506.5" cy="230" r="0.8" fill="rgb(132,132,132)"/><circle cx="609" cy="801.5" r="0.75" fill="rgb(119,119,119)"/><circle cx="359" cy="471" r="0.85" fill="#ddd"/><circle cx="423" cy="421" r="0.75" fill="rgb(118,118,118)"/><circle cx="209.5" cy="397.5" r="0.8" fill="rgb(153,153,153)"/><circle cx="377.5" cy="454" r="0.8" fill="rgb(123,123,123)"/><circle cx="291.5" cy="302" r="0.85" fill="#ddd"/><circle cx="313.5" cy="548" r="0.75" fill="rgb(93,93,93)"/><circle cx="866" cy="421" r="0.8" fill="rgb(175,175,175)"/><circle cx="559.5" cy="213" r="0.75" fill="rgb(117,117,117)"/><circle cx="376" cy="299.5" r="0.75" fill="rgb(104,104,104)"/><circle cx="639" cy="467" r="0.8" fill="rgb(145,145,145)"/><circle cx="699" cy="592.5" r="0.85" fill="#ddd"/><circle cx="667.5" cy="678.5" r="0.75" fill="rgb(76,76,76)"/><circle cx="346.5" cy="320" r="0.75" fill="rgb(67,67,67)"/><circle cx="483.5" cy="430" r="0.75" fill="rgb(110,110,110)"/><circle cx="866" cy="542" r="0.8" fill="rgb(121,121,121)"/><circle cx="613.5" cy="272.5" r="0.75" fill="rgb(105,105,105)"/><circle cx="711.5" cy="325.5" r="0.75" fill="rgb(55,55,55)"/><circle cx="317" cy="627.5" r="0.75" fill="rgb(76,76,76)"/><circle cx="422.5" cy="428.5" r="0.75" fill="rgb(79,79,79)"/><circle cx="639" cy="627" r="0.8" fill="rgb(143,143,143)"/><circle cx="713" cy="374.5" r="0.75" fill="rgb(72,72,72)"/><circle cx="856" cy="530.5" r="0.75" fill="rgb(69,69,69)"/><circle cx="688" cy="405.5" r="0.75" fill="rgb(76,76,76)"/><circle cx="762" cy="703" r="0.75" fill="rgb(110,110,110)"/><circle cx="758.5" cy="295" r="0.75" fill="rgb(118,118,118)"/><circle cx="596.5" cy="229" r="0.75" fill="rgb(110,110,110)"/><circle cx="270" cy="583.5" r="0.75" fill="rgb(79,79,79)"/><circle cx="379" cy="242" r="0.8" fill="rgb(138,138,138)"/><circle cx="760.5" cy="351" r="0.8" fill="rgb(125,125,125)"/><circle cx="233.5" cy="565" r="0.75" fill="rgb(59,59,59)"/><circle cx="819" cy="460" r="0.75" fill="rgb(66,66,66)"/><circle cx="555" cy="502" r="0.8" fill="rgb(124,124,124)"/><circle cx="571" cy="684" r="0.75" fill="rgb(61,61,61)"/><circle cx="469.5" cy="475.5" r="0.75" fill="rgb(118,118,118)"/><circle cx="702.5" cy="680" r="0.75" fill="rgb(97,97,97)"/><circle cx="648.5" cy="329.5" r="0.85" fill="#ddd"/><circle cx="526" cy="572.5" r="0.75" fill="rgb(61,61,61)"/><circle cx="254" cy="411.5" r="0.85" fill="#ddd"/><circle cx="741" cy="226" r="0.75" fill="rgb(61,61,61)"/><circle cx="310.5" cy="510.5" r="0.75" fill="rgb(71,71,71)"/><circle cx="434" cy="218.5" r="0.85" fill="#ddd"/><circle cx="399" cy="462.5" r="0.8" fill="rgb(128,128,128)"/><circle cx="435" cy="307.5" r="0.75" fill="rgb(99,99,99)"/><circle cx="803.5" cy="359" r="0.8" fill="rgb(131,131,131)"/><circle cx="437.5" cy="264.5" r="0.8" fill="rgb(151,151,151)"/><circle cx="809" cy="540" r="0.8" fill="rgb(136,136,136)"/><circle cx="383" cy="391" r="0.75" fill="rgb(88,88,88)"/><circle cx="463.5" cy="209" r="0.8" fill="rgb(174,174,174)"/><circle cx="374.5" cy="598" r="0.8" fill="rgb(156,156,156)"/><circle cx="288" cy="515" r="0.8" fill="rgb(151,151,151)"/><circle cx="676" cy="596" r="0.8" fill="rgb(164,164,164)"/><circle cx="584" cy="455" r="0.8" fill="rgb(141,141,141)"/><circle cx="752.5" cy="751.5" r="0.75" fill="rgb(87,87,87)"/><circle cx="371" cy="202.5" r="0.75" fill="rgb(57,57,57)"/><circle cx="762.5" cy="292" r="0.75" fill="rgb(61,61,61)"/><circle cx="269.5" cy="549.5" r="0.75" fill="rgb(104,104,104)"/><circle cx="539" cy="427.5" r="0.75" fill="rgb(118,118,118)"/><circle cx="341.5" cy="389.5" r="0.85" fill="#ddd"/><circle cx="218" cy="552.5" r="0.8" fill="rgb(124,124,124)"/><circle cx="779" cy="693" r="0.75" fill="rgb(76,76,76)"/><circle cx="725.5" cy="702.5" r="0.8" fill="rgb(167,167,167)"/><circle cx="337.5" cy="345" r="0.8" fill="rgb(128,128,128)"/><circle cx="326" cy="520" r="0.75" fill="rgb(118,118,118)"/><circle cx="451" cy="790" r="0.75" fill="rgb(57,57,57)"/><circle cx="767" cy="433" r="0.75" fill="rgb(79,79,79)"/><circle cx="527" cy="196.5" r="0.75" fill="rgb(87,87,87)"/><circle cx="705" cy="664" r="0.75" fill="rgb(79,79,79)"/><circle cx="701.5" cy="637.5" r="0.8" fill="rgb(155,155,155)"/><circle cx="867.5" cy="446" r="0.75" fill="rgb(61,61,61)"/><circle cx="762.5" cy="614" r="0.75" fill="rgb(98,98,98)"/><circle cx="433.5" cy="677" r="0.75" fill="rgb(73,73,73)"/><circle cx="409.5" cy="246" r="0.75" fill="rgb(63,63,63)"/><circle cx="324.5" cy="473.5" r="0.85" fill="#ddd"/><circle cx="334.5" cy="553.5" r="0.75" fill="rgb(71,71,71)"/><circle cx="444.5" cy="623" r="0.75" fill="rgb(69,69,69)"/><circle cx="810" cy="539.5" r="0.8" fill="rgb(158,158,158)"/><circle cx="713.5" cy="383" r="0.8" fill="rgb(177,177,177)"/><circle cx="480" cy="439" r="0.75" fill="rgb(107,107,107)"/><circle cx="480.5" cy="260.5" r="0.8" fill="rgb(171,171,171)"/><circle cx="424" cy="472.5" r="0.75" fill="rgb(89,89,89)"/><circle cx="832" cy="380" r="0.8" fill="rgb(179,179,179)"/><circle cx="649.5" cy="471" r="0.75" fill="rgb(91,91,91)"/><circle cx="628" cy="691.5" r="0.75" fill="rgb(90,90,90)"/><circle cx="578" cy="327" r="0.8" fill="rgb(151,151,151)"/><circle cx="307.5" cy="623" r="0.75" fill="rgb(73,73,73)"/><circle cx="298" cy="293" r="0.75" fill="rgb(80,80,80)"/><circle cx="806.5" cy="405" r="0.8" fill="rgb(164,164,164)"/><circle cx="699" cy="580" r="0.75" fill="rgb(70,70,70)"/><circle cx="322.5" cy="565.5" r="0.85" fill="#ddd"/><circle cx="503" cy="409" r="0.75" fill="rgb(77,77,77)"/><circle cx="697.5" cy="255.5" r="0.75" fill="rgb(69,69,69)"/><circle cx="444" cy="656.5" r="0.75" fill="rgb(105,105,105)"/><circle cx="593.5" cy="232" r="0.75" fill="rgb(91,91,91)"/><circle cx="713.5" cy="422" r="0.85" fill="#ddd"/><circle cx="856.5" cy="569.5" r="0.75" fill="rgb(90,90,90)"/><circle cx="684.5" cy="357" r="0.75" fill="rgb(79,79,79)"/><circle cx="498.5" cy="796" r="0.8" fill="rgb(140,140,140)"/><circle cx="266" cy="328" r="0.8" fill="rgb(164,164,164)"/><circle cx="508.5" cy="649" r="0.8" fill="rgb(127,127,127)"/><circle cx="579" cy="659" r="0.75" fill="rgb(115,115,115)"/><circle cx="217.5" cy="471" r="0.8" fill="rgb(159,159,159)"/><circle cx="525" cy="465" r="0.8" fill="rgb(127,127,127)"/><circle cx="438" cy="796" r="0.75" fill="rgb(67,67,67)"/><circle cx="775.5" cy="216" r="0.75" fill="rgb(102,102,102)"/><circle cx="531.5" cy="691.5" r="0.8" fill="rgb(175,175,175)"/><circle cx="359.5" cy="461" r="0.85" fill="#ddd"/><circle cx="681" cy="526" r="0.75" fill="rgb(70,70,70)"/><circle cx="737" cy="551" r="0.8" fill="rgb(168,168,168)"/><circle cx="293" cy="546" r="0.75" fill="rgb(91,91,91)"/><circle cx="584" cy="354.5" r="0.75" fill="rgb(74,74,74)"/><circle cx="450" cy="562.5" r="0.85" fill="#ddd"/><circle cx="416.5" cy="536.5" r="0.75" fill="rgb(94,94,94)"/><circle cx="858.5" cy="321.5" r="0.75" fill="rgb(103,103,103)"/><circle cx="482" cy="628" r="0.8" fill="rgb(153,153,153)"/><circle cx="726.5" cy="323" r="0.75" fill="rgb(89,89,89)"/><circle cx="587" cy="386" r="0.75" fill="rgb(79,79,79)"/><circle cx="294.5" cy="243.5" r="0.75" fill="rgb(110,110,110)"/><circle cx="603" cy="530.5" r="0.75" fill="rgb(106,106,106)"/><circle cx="259.5" cy="471" r="0.75" fill="rgb(86,86,86)"/><circle cx="852" cy="561.5" r="0.75" fill="rgb(61,61,61)"/><circle cx="252.5" cy="367.5" r="0.75" fill="rgb(116,116,116)"/><circle cx="303.5" cy="348.5" r="0.8" fill="rgb(174,174,174)"/><circle cx="697.5" cy="436.5" r="0.75" fill="rgb(59,59,59)"/><circle cx="235.5" cy="492" r="0.75" fill="rgb(64,64,64)"/><circle cx="477.5" cy="272.5" r="0.75" fill="rgb(120,120,120)"/><circle cx="383.5" cy="609" r="0.75" fill="rgb(93,93,93)"/><circle cx="685.5" cy="438" r="0.75" fill="rgb(61,61,61)"/><circle cx="264.5" cy="489.5" r="0.75" fill="rgb(73,73,73)"/><circle cx="606" cy="827.5" r="0.8" fill="rgb(123,123,123)"/><circle cx="765.5" cy="211" r="0.75" fill="rgb(60,60,60)"/><circle cx="609" cy="646" r="0.75" fill="rgb(121,121,121)"/><circle cx="455.5" cy="639.5" r="0.85" fill="#ddd"/><circle cx="705.5" cy="212.5" r="0.75" fill="rgb(118,118,118)"/><circle cx="333.5" cy="500.5" r="0.75" fill="rgb(87,87,87)"/><circle cx="460.5" cy="494" r="0.75" fill="rgb(76,76,76)"/><circle cx="391.5" cy="489" r="0.75" fill="rgb(94,94,94)"/><circle cx="751" cy="499.5" r="0.8" fill="rgb(178,178,178)"/><circle cx="558.5" cy="398" r="0.75" fill="rgb(93,93,93)"/><circle cx="449.5" cy="349.5" r="0.8" fill="rgb(134,134,134)"/><circle cx="717.5" cy="278.5" r="0.8" fill="rgb(141,141,141)"/><circle cx="688.5" cy="325" r="0.75" fill="rgb(89,89,89)"/><circle cx="767" cy="294" r="0.75" fill="rgb(65,65,65)"/><circle cx="324" cy="243.5" r="0.8" fill="rgb(177,177,177)"/><circle cx="802" cy="367.5" r="0.8" fill="rgb(169,169,169)"/><circle cx="507.5" cy="414.5" r="0.75" fill="rgb(79,79,79)"/><circle cx="207" cy="408.5" r="0.75" fill="rgb(56,56,56)"/><circle cx="458" cy="674" r="0.75" fill="rgb(119,119,119)"/><circle cx="639.5" cy="265" r="0.75" fill="rgb(119,119,119)"/><circle cx="629" cy="340" r="0.8" fill="rgb(160,160,160)"/><circle cx="603.5" cy="360.5" r="0.75" fill="rgb(85,85,85)"/><circle cx="280.5" cy="282.5" r="0.75" fill="rgb(94,94,94)"/><circle cx="452.5" cy="774.5" r="1.05" fill="#fff"/><circle cx="365.5" cy="742" r="0.75" fill="rgb(110,110,110)"/><circle cx="535.5" cy="835" r="0.75" fill="rgb(91,91,91)"/><circle cx="794" cy="522.5" r="0.8" fill="rgb(145,145,145)"/><circle cx="258.5" cy="460" r="0.75" fill="rgb(55,55,55)"/><circle cx="456.5" cy="439" r="0.75" fill="rgb(82,82,82)"/><circle cx="314" cy="495.5" r="0.75" fill="rgb(90,90,90)"/><circle cx="595" cy="333.5" r="0.85" fill="#ddd"/><circle cx="573.5" cy="364" r="0.8" fill="rgb(157,157,157)"/><circle cx="435" cy="428" r="0.75" fill="rgb(89,89,89)"/><circle cx="668.5" cy="449.5" r="0.75" fill="rgb(77,77,77)"/><circle cx="461" cy="654.5" r="0.75" fill="rgb(75,75,75)"/><circle cx="548" cy="467.5" r="0.75" fill="rgb(71,71,71)"/><circle cx="654.5" cy="625.5" r="0.75" fill="rgb(116,116,116)"/><circle cx="290" cy="568.5" r="0.75" fill="rgb(103,103,103)"/><circle cx="417" cy="523" r="0.75" fill="rgb(100,100,100)"/><circle cx="633" cy="226" r="0.75" fill="rgb(119,119,119)"/><circle cx="453.5" cy="450" r="0.8" fill="rgb(151,151,151)"/><circle cx="384" cy="734.5" r="0.8" fill="rgb(153,153,153)"/><circle cx="573.5" cy="746.5" r="0.8" fill="rgb(171,171,171)"/><circle cx="433" cy="177" r="0.75" fill="rgb(114,114,114)"/><circle cx="716.5" cy="293.5" r="0.8" fill="rgb(178,178,178)"/><circle cx="754" cy="456.5" r="0.85" fill="#ddd"/><circle cx="370" cy="626.5" r="0.75" fill="rgb(76,76,76)"/><circle cx="456" cy="494.5" r="0.75" fill="rgb(57,57,57)"/><circle cx="448" cy="280" r="0.8" fill="rgb(128,128,128)"/><circle cx="663" cy="420.5" r="0.75" fill="rgb(69,69,69)"/><circle cx="445" cy="710.5" r="0.75" fill="rgb(81,81,81)"/><circle cx="647" cy="474" r="0.75" fill="rgb(109,109,109)"/><circle cx="348" cy="442.5" r="0.8" fill="rgb(145,145,145)"/><circle cx="622.5" cy="577.5" r="0.8" fill="rgb(140,140,140)"/><circle cx="674" cy="810.5" r="0.75" fill="rgb(64,64,64)"/><circle cx="487.5" cy="494" r="0.75" fill="rgb(76,76,76)"/><circle cx="812" cy="407.5" r="0.75" fill="rgb(72,72,72)"/><circle cx="577.5" cy="444.5" r="0.8" fill="rgb(155,155,155)"/><circle cx="656" cy="395.5" r="0.75" fill="rgb(61,61,61)"/><circle cx="652" cy="624" r="0.75" fill="rgb(107,107,107)"/><circle cx="370" cy="190" r="0.75" fill="rgb(63,63,63)"/><circle cx="542.5" cy="309" r="0.75" fill="rgb(98,98,98)"/><circle cx="274" cy="290.5" r="0.75" fill="rgb(86,86,86)"/><circle cx="487.5" cy="795.5" r="0.75" fill="rgb(84,84,84)"/><circle cx="559.5" cy="445" r="0.8" fill="rgb(137,137,137)"/><circle cx="786" cy="470" r="0.75" fill="rgb(93,93,93)"/><circle cx="593.5" cy="459.5" r="0.75" fill="rgb(78,78,78)"/><circle cx="591" cy="747.5" r="0.75" fill="rgb(90,90,90)"/><circle cx="662" cy="600" r="0.75" fill="rgb(96,96,96)"/><circle cx="425" cy="556.5" r="0.75" fill="rgb(67,67,67)"/><circle cx="411" cy="520" r="0.75" fill="rgb(65,65,65)"/><circle cx="456" cy="258" r="0.75" fill="rgb(102,102,102)"/><circle cx="467" cy="441" r="0.85" fill="#ddd"/><circle cx="474.5" cy="669" r="0.75" fill="rgb(65,65,65)"/><circle cx="363" cy="530.5" r="0.75" fill="rgb(58,58,58)"/><circle cx="510.5" cy="784" r="0.75" fill="rgb(110,110,110)"/><circle cx="283" cy="468" r="0.75" fill="rgb(69,69,69)"/><circle cx="491" cy="310.5" r="0.8" fill="rgb(156,156,156)"/><circle cx="391.5" cy="485.5" r="0.75" fill="rgb(96,96,96)"/><circle cx="394" cy="548.5" r="0.75" fill="rgb(81,81,81)"/><circle cx="547" cy="293" r="0.75" fill="rgb(103,103,103)"/><circle cx="553.5" cy="644" r="0.75" fill="rgb(94,94,94)"/><circle cx="830.5" cy="326" r="0.8" fill="rgb(170,170,170)"/><circle cx="332" cy="460.5" r="0.75" fill="rgb(64,64,64)"/><circle cx="657" cy="621.5" r="0.75" fill="rgb(73,73,73)"/><circle cx="657.5" cy="417" r="0.75" fill="rgb(103,103,103)"/><circle cx="821.5" cy="321" r="0.75" fill="rgb(100,100,100)"/><circle cx="344.5" cy="370" r="0.75" fill="rgb(69,69,69)"/><circle cx="428" cy="736" r="0.75" fill="rgb(80,80,80)"/><circle cx="504" cy="401" r="0.8" fill="rgb(161,161,161)"/><circle cx="553" cy="306" r="0.85" fill="#ddd"/><circle cx="586" cy="710" r="0.75" fill="rgb(106,106,106)"/><circle cx="383" cy="415.5" r="0.8" fill="rgb(122,122,122)"/><circle cx="458.5" cy="203" r="0.8" fill="rgb(121,121,121)"/><circle cx="511" cy="460" r="0.75" fill="rgb(85,85,85)"/><circle cx="271.5" cy="572" r="0.75" fill="rgb(78,78,78)"/><circle cx="681" cy="767" r="0.75" fill="rgb(67,67,67)"/><circle cx="759" cy="581.5" r="0.85" fill="#ddd"/><circle cx="487" cy="811" r="0.8" fill="rgb(158,158,158)"/><circle cx="750" cy="549" r="0.75" fill="rgb(83,83,83)"/><circle cx="544" cy="412" r="0.75" fill="rgb(103,103,103)"/><circle cx="338" cy="370" r="0.75" fill="rgb(63,63,63)"/><circle cx="380.5" cy="573.5" r="0.75" fill="rgb(106,106,106)"/><circle cx="461.5" cy="481.5" r="0.75" fill="rgb(64,64,64)"/><circle cx="276.5" cy="558.5" r="1.05" fill="#fff"/><circle cx="820" cy="605" r="0.8" fill="rgb(177,177,177)"/><circle cx="370" cy="542.5" r="0.75" fill="rgb(83,83,83)"/><circle cx="557.3" cy="256.7" r="1.0" fill="#e8e8e8"/><circle cx="643.4" cy="234.3" r="1.0" fill="#e8e8e8"/><circle cx="680" cy="177.5" r="1.0" fill="#e8e8e8"/><circle cx="531.9" cy="187" r="0.9" fill="#e8e8e8"/><circle cx="589.3" cy="262.2" r="0.9" fill="#e8e8e8"/><circle cx="339" cy="391.1" r="1.2" fill="#e8e8e8"/><circle cx="268.8" cy="481.3" r="1.0" fill="#e8e8e8"/><circle cx="293.9" cy="434.9" r="0.8" fill="#e8e8e8"/><circle cx="645.6" cy="470.7" r="1.1" fill="#e8e8e8"/><circle cx="674.5" cy="430.2" r="1.1" fill="#e8e8e8"/><circle cx="729.2" cy="490.9" r="1.1" fill="#e8e8e8"/><circle cx="711.7" cy="329.7" r="0.9" fill="#e8e8e8"/><circle cx="627.5" cy="408.9" r="0.9" fill="#e8e8e8"/><circle cx="676.7" cy="389.2" r="0.9" fill="#e8e8e8"/><circle cx="872.1" cy="361.9" r="1.3" fill="#e8e8e8"/><circle cx="812.6" cy="384.6" r="1.0" fill="#e8e8e8"/><circle cx="843.4" cy="389.2" r="1.0" fill="#e8e8e8"/><circle cx="782.8" cy="490.9" r="1.0" fill="#e8e8e8"/><circle cx="880.3" cy="493" r="1.0" fill="#e8e8e8"/><circle cx="360.6" cy="529.1" r="1.0" fill="#e8e8e8"/><circle cx="427.3" cy="547.7" r="1.0" fill="#e8e8e8"/><circle cx="329.7" cy="512.2" r="1.0" fill="#e8e8e8"/><circle cx="354.3" cy="584.3" r="0.9" fill="#e8e8e8"/><circle cx="510.9" cy="518.2" r="0.9" fill="#e8e8e8"/><circle cx="623.4" cy="526.4" r="0.9" fill="#e8e8e8"/><circle cx="689.3" cy="679.7" r="0.9" fill="#e8e8e8"/><circle cx="753.8" cy="529.1" r="0.9" fill="#e8e8e8"/><circle cx="739.6" cy="512.2" r="0.9" fill="#e8e8e8"/><circle cx="821.6" cy="632.1" r="0.9" fill="#e8e8e8"/><circle cx="399.4" cy="760.6" r="1.0" fill="#e8e8e8"/><circle cx="674" cy="689.6" r="0.9" fill="#e8e8e8"/><circle cx="545" cy="807" r="0.9" fill="#e8e8e8"/><circle cx="284" cy="697" r="0.85" fill="rgb(120,120,120)"/><circle cx="298.7" cy="705" r="0.85" fill="rgb(150,150,150)"/><circle cx="305" cy="708.9" r="0.85" fill="rgb(180,180,180)"/><circle cx="290.4" cy="708.6" r="0.85" fill="rgb(210,210,210)"/><circle cx="300" cy="713.3" r="0.85" fill="rgb(120,120,120)"/><circle cx="302.9" cy="714.8" r="0.85" fill="rgb(150,150,150)"/><circle cx="293.6" cy="718.7" r="0.85" fill="rgb(180,180,180)"/><circle cx="294.9" cy="724.8" r="0.85" fill="rgb(210,210,210)"/><circle cx="308.9" cy="722.9" r="0.85" fill="rgb(120,120,120)"/><circle cx="312.7" cy="724.2" r="0.85" fill="rgb(150,150,150)"/><circle cx="314" cy="716.5" r="0.85" fill="rgb(180,180,180)"/><circle cx="311.8" cy="693.6" r="0.85" fill="rgb(210,210,210)"/><circle cx="312.7" cy="702.7" r="0.85" fill="rgb(120,120,120)"/><circle cx="322.3" cy="659.4" r="0.85" fill="rgb(150,150,150)"/><circle cx="322.3" cy="663.8" r="0.85" fill="rgb(180,180,180)"/><circle cx="330.6" cy="671.2" r="0.85" fill="rgb(210,210,210)"/><circle cx="332" cy="673.4" r="0.85" fill="rgb(120,120,120)"/><circle cx="329.3" cy="675.7" r="0.85" fill="rgb(150,150,150)"/><circle cx="331.6" cy="681" r="0.85" fill="rgb(180,180,180)"/><circle cx="322" cy="673.8" r="0.85" fill="rgb(210,210,210)"/><circle cx="316.5" cy="666.4" r="0.85" fill="rgb(120,120,120)"/><circle cx="297.8" cy="664.9" r="0.85" fill="rgb(150,150,150)"/><circle cx="354.8" cy="678.6" r="0.85" fill="rgb(180,180,180)"/><circle cx="369.2" cy="680.5" r="0.85" fill="rgb(210,210,210)"/><circle cx="342.9" cy="692.7" r="0.85" fill="rgb(120,120,120)"/><circle cx="335" cy="642.8" r="0.85" fill="rgb(150,150,150)"/><circle cx="355.2" cy="644.8" r="0.85" fill="rgb(180,180,180)"/><circle cx="360.3" cy="664.9" r="0.85" fill="rgb(210,210,210)"/><circle cx="385.8" cy="662.7" r="0.85" fill="rgb(120,120,120)"/><circle cx="340.1" cy="709.5" r="0.85" fill="rgb(150,150,150)"/><circle cx="354.2" cy="707.8" r="0.85" fill="rgb(180,180,180)"/><circle cx="388.8" cy="707.6" r="0.85" fill="rgb(210,210,210)"/><circle cx="365.9" cy="718.4" r="0.85" fill="rgb(120,120,120)"/>
<polyline points="326.7,208.4 327.3,236.5 345.8,194.7" fill="none" stroke="#0000ee" stroke-width="1.2"/>
<polyline points="577.5,131.3 588.5,151.5 588.7,187.6 569.3,216 549.4,235.7" fill="none" stroke="#0000ee" stroke-width="1.2"/>
<polyline points="604.3,134 609,145.8 588.5,151.5" fill="none" stroke="#0000ee" stroke-width="1.2"/>
<polyline points="667.7,150.2 662.2,159.7 669.9,181.3 674.3,210 700,227.8 717.2,204.5 732.7,180.5" fill="none" stroke="#0000ee" stroke-width="1.2"/>
<polyline points="605.4,301.8 680.8,347.4 745.6,363.3 742,306.2 685.5,286 605.4,301.8" fill="none" stroke="#0000ee" stroke-width="1.2"/>
<polyline points="742,306.2 756.8,282.1 751.6,266.8" fill="none" stroke="#0000ee" stroke-width="1.2"/>
<polyline points="745.6,363.3 750,372.3 733.5,375.6" fill="none" stroke="#0000ee" stroke-width="1.2"/>
<polyline points="238.7,313.3 257.6,329.1 331.4,324.8 353.5,352.9" fill="none" stroke="#0000ee" stroke-width="1.2"/>
<polyline points="402.4,290.3 396.4,326.9 439.5,363 493.6,352.4" fill="none" stroke="#0000ee" stroke-width="1.2"/>
<polyline points="439.5,363 408.1,393.9 384.4,437.3" fill="none" stroke="#0000ee" stroke-width="1.2"/>
<polyline points="289.6,440.6 334.6,470.9 340.9,495.2 326.2,507.8 308.4,566.8 252.7,569.6 251,483.2 289.6,440.6" fill="none" stroke="#0000ee" stroke-width="1.2"/>
<polyline points="252.7,569.6 297.5,645.8 315.2,698 316.1,713.3" fill="none" stroke="#0000ee" stroke-width="1.2"/>
<polyline points="216.9,613.8 290.7,695.2 301.6,705.1 316.1,713.3 343.9,747.8 402.1,784.4 406,790.7" fill="none" stroke="#0000ee" stroke-width="1.2"/>
<polyline points="562.8,417.4 589.3,437 613,429.3 636.3,454 656.8,425.8" fill="none" stroke="#0000ee" stroke-width="1.2"/>
<polyline points="580,508.6 510.1,470.1 492.8,484.5 466.1,505.1 441.2,513.2 405.4,559.5 394,587.9 392.5,617.2 407.8,619" fill="none" stroke="#0000ee" stroke-width="1.2"/>
<polyline points="466.1,505.1 474.4,537.4 474.4,550.5 472.2,571.5 473.8,587.3 493.4,594" fill="none" stroke="#0000ee" stroke-width="1.2"/>
<polyline points="770.2,403.4 774.6,419.8 783.6,418.5 789.1,432.1 801.9,431 810.7,458.6 843.4,460.8 851.6,474.5" fill="none" stroke="#0000ee" stroke-width="1.2"/>
<polyline points="588.2,522.3 639.3,570.1 652.4,583.2 689,608.9 740.9,625.3" fill="none" stroke="#0000ee" stroke-width="1.2"/>
<polyline points="558.7,569 638.5,607.8 690.7,629.7 740.9,625.3" fill="none" stroke="#0000ee" stroke-width="1.2"/>
<polyline points="740.9,625.3 836.6,581.6 855.2,547.4 903.6,538.1" fill="none" stroke="#0000ee" stroke-width="1.2"/>
<polyline points="836.6,581.6 868.6,590.1 877.3,592.8 892.6,587.3" fill="none" stroke="#0000ee" stroke-width="1.2"/>
<polyline points="836.6,581.6 868.9,646.6" fill="none" stroke="#0000ee" stroke-width="1.2"/>
<polyline points="740.9,625.3 763.4,724.3 849.7,681.4" fill="none" stroke="#0000ee" stroke-width="1.2"/>
<polyline points="551.3,621.5 539.6,628.9 577.5,658.9 551.3,621.5" fill="none" stroke="#0000ee" stroke-width="1.2"/>
<polyline points="485.5,672.3 555.4,703.2 577.5,721.3 580,731.9" fill="none" stroke="#0000ee" stroke-width="1.2"/>
<polyline points="642.3,647.4 632.7,669.3 644.8,686.8 621.8,756.8 598.6,803 571,843.1" fill="none" stroke="#0000ee" stroke-width="1.2"/>
<polyline points="578.4,843.1 607.9,828.1 629.7,821.5 682.2,800.8 726,792 741,788.7" fill="none" stroke="#0000ee" stroke-width="1.2"/>
<polyline points="446.4,828.9 454,799.4 483.3,794.8 515.5,808.7 499.1,828.4 488.2,838.5" fill="none" stroke="#0000ee" stroke-width="1.2"/>
<polyline points="216.9,613.8 200,596" fill="none" stroke="#0000ee" stroke-width="1.2"/>
<polyline points="903.6,538.1 925,534" fill="none" stroke="#0000ee" stroke-width="1.2"/>
<polyline points="892.6,587.3 910,581" fill="none" stroke="#0000ee" stroke-width="1.2"/>
<polyline points="868.9,646.6 880,669" fill="none" stroke="#0000ee" stroke-width="1.2"/>
<polyline points="849.7,681.4 870,671" fill="none" stroke="#0000ee" stroke-width="1.2"/>
<polyline points="741,788.7 760,784" fill="none" stroke="#0000ee" stroke-width="1.2"/>
<polyline points="577.5,131.3 574,125" fill="none" stroke="#0000ee" stroke-width="1.2"/>
<polyline points="604.3,134 602,128" fill="none" stroke="#0000ee" stroke-width="1.2"/>
<polyline points="667.7,150.2 672,143" fill="none" stroke="#0000ee" stroke-width="1.2"/>
<polyline points="732.7,180.5 738,172" fill="none" stroke="#0000ee" stroke-width="1.2"/>
<polyline points="238.7,313.3 228,305" fill="none" stroke="#0000ee" stroke-width="1.2"/>
<polyline points="326.7,208.4 326.5,200" fill="none" stroke="#0000ee" stroke-width="1.2"/>
<polyline points="345.8,194.7 350,185" fill="none" stroke="#0000ee" stroke-width="1.2"/>
<polyline points="446.4,828.9 444,838" fill="none" stroke="#0000ee" stroke-width="1.2"/>
<polyline points="488.2,838.5 480,846" fill="none" stroke="#0000ee" stroke-width="1.2"/>
<polyline points="571,843.1 565,852" fill="none" stroke="#0000ee" stroke-width="1.2"/>
<polyline points="578.4,843.1 560,852" fill="none" stroke="#0000ee" stroke-width="1.2"/>
<circle cx="549.4" cy="235.7" r="2.2" fill="#fff"/>
<circle cx="327.3" cy="236.5" r="1.5" fill="#fff"/>
<circle cx="588.7" cy="187.6" r="0.9" fill="#fff"/>
<circle cx="588.5" cy="151.5" r="0.9" fill="#fff"/>
<circle cx="609" cy="145.8" r="0.8" fill="#fff"/>
<circle cx="569.3" cy="216" r="0.8" fill="#fff"/>
<circle cx="669.9" cy="181.3" r="1.0" fill="#fff"/>
<circle cx="674.3" cy="210" r="0.9" fill="#fff"/>
<circle cx="700" cy="227.8" r="1.1" fill="#fff"/>
<circle cx="717.2" cy="204.5" r="1.4" fill="#fff"/>
<circle cx="662.2" cy="159.7" r="0.8" fill="#fff"/>
<circle cx="605.4" cy="301.8" r="1.3" fill="#fff"/>
<circle cx="685.5" cy="286" r="1.2" fill="#fff"/>
<circle cx="742" cy="306.2" r="1.6" fill="#fff"/>
<circle cx="756.8" cy="282.1" r="1.2" fill="#fff"/>
<circle cx="751.6" cy="266.8" r="0.9" fill="#fff"/>
<circle cx="680.8" cy="347.4" r="1.2" fill="#fff"/>
<circle cx="745.6" cy="363.3" r="1.4" fill="#fff"/>
<circle cx="750" cy="372.3" r="1.0" fill="#fff"/>
<circle cx="733.5" cy="375.6" r="1.1" fill="#fff"/>
<circle cx="257.6" cy="329.1" r="0.9" fill="#fff"/>
<circle cx="331.4" cy="324.8" r="0.9" fill="#fff"/>
<circle cx="353.5" cy="352.9" r="0.9" fill="#fff"/>
<circle cx="396.4" cy="326.9" r="0.8" fill="#fff"/>
<circle cx="408.1" cy="393.9" r="0.9" fill="#fff"/>
<circle cx="384.4" cy="437.3" r="0.8" fill="#fff"/>
<circle cx="493.1" cy="352.1" r="0.8" fill="#fff"/>
<circle cx="289.6" cy="440.6" r="1.9" fill="#fff"/>
<circle cx="334.6" cy="470.9" r="2.6" fill="#fff"/>
<circle cx="340.9" cy="495.2" r="1.5" fill="#fff"/>
<circle cx="326.2" cy="507.8" r="1.3" fill="#fff"/>
<circle cx="308.4" cy="566.8" r="1.5" fill="#fff"/>
<circle cx="252.7" cy="569.6" r="2.2" fill="#fff"/>
<circle cx="251" cy="483.2" r="1.5" fill="#fff"/>
<circle cx="297.5" cy="645.8" r="0.9" fill="#fff"/>
<circle cx="315.2" cy="698" r="1.0" fill="#fff"/>
<circle cx="316.1" cy="713.3" r="1.1" fill="#fff"/>
<circle cx="290.7" cy="695.2" r="2.4" fill="#fff"/>
<circle cx="301.6" cy="705.1" r="1.2" fill="#fff"/>
<circle cx="343.9" cy="747.8" r="1.0" fill="#fff"/>
<circle cx="402.1" cy="784.4" r="1.0" fill="#fff"/>
<circle cx="406" cy="790.7" r="1.0" fill="#fff"/>
<circle cx="562.8" cy="417.4" r="1.3" fill="#fff"/>
<circle cx="613" cy="429.3" r="1.6" fill="#fff"/>
<circle cx="636.3" cy="454" r="1.7" fill="#fff"/>
<circle cx="656.8" cy="425.8" r="1.8" fill="#fff"/>
<circle cx="589.3" cy="437" r="1.3" fill="#fff"/>
<circle cx="510.1" cy="470.1" r="1.2" fill="#fff"/>
<circle cx="492.8" cy="484.5" r="1.5" fill="#fff"/>
<circle cx="466.1" cy="505.1" r="2.3" fill="#fff"/>
<circle cx="441.2" cy="513.2" r="1.5" fill="#fff"/>
<circle cx="405.4" cy="559.5" r="1.5" fill="#fff"/>
<circle cx="394" cy="587.9" r="1.0" fill="#fff"/>
<circle cx="392.5" cy="617.2" r="1.5" fill="#fff"/>
<circle cx="407.8" cy="619" r="0.9" fill="#fff"/>
<circle cx="472.2" cy="571.5" r="1.9" fill="#fff"/>
<circle cx="473.8" cy="587.3" r="1.3" fill="#fff"/>
<circle cx="493.4" cy="594" r="0.9" fill="#fff"/>
<circle cx="580" cy="508.6" r="0.9" fill="#fff"/>
<circle cx="770.2" cy="403.4" r="0.8" fill="#fff"/>
<circle cx="774.6" cy="419.8" r="1.0" fill="#fff"/>
<circle cx="783.6" cy="418.5" r="0.8" fill="#fff"/>
<circle cx="789.1" cy="432.1" r="0.8" fill="#fff"/>
<circle cx="801.9" cy="431" r="0.8" fill="#fff"/>
<circle cx="810.7" cy="458.6" r="1.0" fill="#fff"/>
<circle cx="843.4" cy="460.8" r="0.8" fill="#fff"/>
<circle cx="851.6" cy="474.5" r="0.9" fill="#fff"/>
<circle cx="588.2" cy="522.3" r="1.3" fill="#fff"/>
<circle cx="652.4" cy="583.2" r="1.0" fill="#fff"/>
<circle cx="689" cy="608.9" r="0.9" fill="#fff"/>
<circle cx="740.9" cy="625.3" r="1.9" fill="#fff"/>
<circle cx="558.7" cy="569" r="1.9" fill="#fff"/>
<circle cx="638.5" cy="607.8" r="1.9" fill="#fff"/>
<circle cx="690.7" cy="629.7" r="1.2" fill="#fff"/>
<circle cx="836.6" cy="581.6" r="1.7" fill="#fff"/>
<circle cx="855.2" cy="547.4" r="1.4" fill="#fff"/>
<circle cx="868.6" cy="590.1" r="1.1" fill="#fff"/>
<circle cx="877.3" cy="592.8" r="0.9" fill="#fff"/>
<circle cx="763.4" cy="724.3" r="1.4" fill="#fff"/>
<circle cx="551.3" cy="621.5" r="1.3" fill="#fff"/>
<circle cx="539.6" cy="628.9" r="0.9" fill="#fff"/>
<circle cx="577.5" cy="658.9" r="1.1" fill="#fff"/>
<circle cx="485.5" cy="672.3" r="1.0" fill="#fff"/>
<circle cx="555.4" cy="703.2" r="1.9" fill="#fff"/>
<circle cx="577.5" cy="721.3" r="1.6" fill="#fff"/>
<circle cx="580" cy="731.9" r="0.8" fill="#fff"/>
<circle cx="644.8" cy="686.8" r="0.9" fill="#fff"/>
<circle cx="621.8" cy="756.8" r="1.0" fill="#fff"/>
<circle cx="598.6" cy="803" r="1.0" fill="#fff"/>
<circle cx="607.9" cy="828.1" r="0.8" fill="#fff"/>
<circle cx="629.7" cy="821.5" r="0.8" fill="#fff"/>
<circle cx="682.2" cy="800.8" r="0.9" fill="#fff"/>
<circle cx="483.3" cy="794.8" r="0.8" fill="#fff"/>
<circle cx="515.5" cy="808.7" r="0.9" fill="#fff"/>
<circle cx="499.1" cy="828.4" r="0.8" fill="#fff"/>
<circle cx="454" cy="799.4" r="0.8" fill="#fff"/>
</g>
<circle cx="550.0" cy="487.0" r="358.55" fill="none" stroke="#c4dbe8" stroke-width="1.1"/>
<g font-family="'Liberation Sans',sans-serif" text-rendering="geometricPrecision">
<text x="546.8" y="176.0" font-size="10px" fill="#000" stroke="#000" stroke-width="4" stroke-linejoin="round" opacity="0.85">URSA MINOR</text><text x="546.8" y="176.0" font-size="10px" fill="#00cccc" stroke="#00cccc" stroke-width="0.25">URSA MINOR</text>
<text x="657" y="325" font-size="10px" fill="#000" stroke="#000" stroke-width="4" stroke-linejoin="round" opacity="0.85">CEPHEUS</text><text x="657" y="325" font-size="10px" fill="#00cccc" stroke="#00cccc" stroke-width="0.25">CEPHEUS</text>
<text x="393.5" y="368" font-size="10px" fill="#000" stroke="#000" stroke-width="4" stroke-linejoin="round" opacity="0.85">CAMELOPARDALIS</text><text x="393.5" y="368" font-size="10px" fill="#00cccc" stroke="#00cccc" stroke-width="0.25">CAMELOPARDALIS</text>
<text x="578.9" y="439" font-size="10px" fill="#000" stroke="#000" stroke-width="4" stroke-linejoin="round" opacity="0.85">CASSIOPEIA</text><text x="578.9" y="439" font-size="10px" fill="#00cccc" stroke="#00cccc" stroke-width="0.25">CASSIOPEIA</text>
<text x="789" y="443" font-size="10px" fill="#000" stroke="#000" stroke-width="4" stroke-linejoin="round" opacity="0.85">LACERTA</text><text x="789" y="443" font-size="10px" fill="#00cccc" stroke="#00cccc" stroke-width="0.25">LACERTA</text>
<text x="277" y="509.2" font-size="10px" fill="#000" stroke="#000" stroke-width="4" stroke-linejoin="round" opacity="0.85">AURIGA</text><text x="277" y="509.2" font-size="10px" fill="#00cccc" stroke="#00cccc" stroke-width="0.25">AURIGA</text>
<text x="462.2" y="548" font-size="10px" fill="#000" stroke="#000" stroke-width="4" stroke-linejoin="round" opacity="0.85">PERSEUS</text><text x="462.2" y="548" font-size="10px" fill="#00cccc" stroke="#00cccc" stroke-width="0.25">PERSEUS</text>
<text x="616.6" y="580" font-size="10px" fill="#000" stroke="#000" stroke-width="4" stroke-linejoin="round" opacity="0.85">ANDROMEDA</text><text x="616.6" y="580" font-size="10px" fill="#00cccc" stroke="#00cccc" stroke-width="0.25">ANDROMEDA</text>
<text x="857.4" y="617.6" font-size="10px" fill="#000" stroke="#000" stroke-width="4" stroke-linejoin="round" opacity="0.85">PEGASUS</text><text x="857.4" y="617.6" font-size="10px" fill="#00cccc" stroke="#00cccc" stroke-width="0.25">PEGASUS</text>
<text x="525.6" y="644" font-size="10px" fill="#000" stroke="#000" stroke-width="4" stroke-linejoin="round" opacity="0.85">TRIANGULUM</text><text x="525.6" y="644" font-size="10px" fill="#00cccc" stroke="#00cccc" stroke-width="0.25">TRIANGULUM</text>
<text x="287.1" y="684" font-size="10px" fill="#000" stroke="#000" stroke-width="4" stroke-linejoin="round" opacity="0.85">TAURUS</text><text x="287.1" y="684" font-size="10px" fill="#00cccc" stroke="#00cccc" stroke-width="0.25">TAURUS</text>
<text x="517.2" y="706" font-size="10px" fill="#000" stroke="#000" stroke-width="4" stroke-linejoin="round" opacity="0.85">ARIES</text><text x="517.2" y="706" font-size="10px" fill="#00cccc" stroke="#00cccc" stroke-width="0.25">ARIES</text>
<text x="690.9" y="801" font-size="10px" fill="#000" stroke="#000" stroke-width="4" stroke-linejoin="round" opacity="0.85">PISCES</text><text x="690.9" y="801" font-size="10px" fill="#00cccc" stroke="#00cccc" stroke-width="0.25">PISCES</text>
<text x="559.5" y="359.2" font-size="11px" fill="#000" stroke="#000" stroke-width="4" stroke-linejoin="round" opacity="0.85">NGC 771</text><text x="559.5" y="359.2" font-size="11px" fill="#b455d0" stroke="#b455d0" stroke-width="0.12">NGC 771</text>
<text x="772.4" y="345.4" font-size="11px" fill="#000" stroke="#000" stroke-width="4" stroke-linejoin="round" opacity="0.85">IC 1396</text><text x="772.4" y="345.4" font-size="11px" fill="#b455d0" stroke="#b455d0" stroke-width="0.12">IC 1396</text>
<text x="832.8" y="378.3" font-size="11px" fill="#000" stroke="#000" stroke-width="4" stroke-linejoin="round" opacity="0.85">M39</text><text x="832.8" y="378.3" font-size="11px" fill="#b455d0" stroke="#b455d0" stroke-width="0.12">M39</text>
<text x="233.3" y="411" font-size="11px" fill="#000" stroke="#000" stroke-width="4" stroke-linejoin="round" opacity="0.85">NGC 2281</text><text x="233.3" y="411" font-size="11px" fill="#b455d0" stroke="#b455d0" stroke-width="0.12">NGC 2281</text>
<text x="461.5" y="410" font-size="11px" fill="#000" stroke="#000" stroke-width="4" stroke-linejoin="round" opacity="0.85">NGC 1502</text><text x="461.5" y="410" font-size="11px" fill="#b455d0" stroke="#b455d0" stroke-width="0.12">NGC 1502</text>
<text x="732.6" y="473.1" font-size="11px" fill="#000" stroke="#000" stroke-width="4" stroke-linejoin="round" opacity="0.85">NGC 7686</text><text x="732.6" y="473.1" font-size="11px" fill="#b455d0" stroke="#b455d0" stroke-width="0.12">NGC 7686</text>
<text x="547.5" y="458.9" font-size="11px" fill="#000" stroke="#000" stroke-width="4" stroke-linejoin="round" opacity="0.85">NGC 869</text><text x="547.5" y="458.9" font-size="11px" fill="#b455d0" stroke="#b455d0" stroke-width="0.12">NGC 869</text>
<text x="544.5" y="473.9" font-size="11px" fill="#000" stroke="#000" stroke-width="4" stroke-linejoin="round" opacity="0.85">NGC 884</text><text x="544.5" y="473.9" font-size="11px" fill="#b455d0" stroke="#b455d0" stroke-width="0.12">NGC 884</text>
<text x="242.8" y="522.3" font-size="11px" fill="#000" stroke="#000" stroke-width="4" stroke-linejoin="round" opacity="0.85">M37</text><text x="242.8" y="522.3" font-size="11px" fill="#b455d0" stroke="#b455d0" stroke-width="0.12">M37</text>
<text x="269" y="529.1" font-size="11px" fill="#000" stroke="#000" stroke-width="4" stroke-linejoin="round" opacity="0.85">M36</text><text x="269" y="529.1" font-size="11px" fill="#b455d0" stroke="#b455d0" stroke-width="0.12">M36</text>
<text x="273.7" y="626.1" font-size="11px" fill="#000" stroke="#000" stroke-width="4" stroke-linejoin="round" opacity="0.85">NGC 1746</text><text x="273.7" y="626.1" font-size="11px" fill="#b455d0" stroke="#b455d0" stroke-width="0.12">NGC 1746</text>
<text x="393.6" y="678" font-size="11px" fill="#000" stroke="#000" stroke-width="4" stroke-linejoin="round" opacity="0.85">M45</text><text x="393.6" y="678" font-size="11px" fill="#b455d0" stroke="#b455d0" stroke-width="0.12">M45</text>
<text x="514.7" y="566.8" font-size="11px" fill="#000" stroke="#000" stroke-width="4" stroke-linejoin="round" opacity="0.85">M34</text><text x="514.7" y="566.8" font-size="11px" fill="#b455d0" stroke="#b455d0" stroke-width="0.12">M34</text>
<text x="672.3" y="562.7" font-size="11px" fill="#000" stroke="#000" stroke-width="4" stroke-linejoin="round" opacity="0.85">M31</text><text x="672.3" y="562.7" font-size="11px" fill="#b455d0" stroke="#b455d0" stroke-width="0.12">M31</text>
<text x="573.7" y="604.8" font-size="11px" fill="#000" stroke="#000" stroke-width="4" stroke-linejoin="round" opacity="0.85">NGC 752</text><text x="573.7" y="604.8" font-size="11px" fill="#b455d0" stroke="#b455d0" stroke-width="0.12">NGC 752</text>
<text x="613" y="651.8" font-size="11px" fill="#000" stroke="#000" stroke-width="4" stroke-linejoin="round" opacity="0.85">M33</text><text x="613" y="651.8" font-size="11px" fill="#b455d0" stroke="#b455d0" stroke-width="0.12">M33</text>
<text x="507.9" y="766.9" font-size="11px" fill="#000" stroke="#000" stroke-width="4" stroke-linejoin="round" opacity="0.85">Uranus</text><text x="507.9" y="766.9" font-size="11px" fill="#00cc00" stroke="#00cc00" stroke-width="0.25">Uranus</text>
</g>
<ellipse cx="553.2" cy="355.1" rx="3" ry="2.2" fill="none" stroke="#e668c6" stroke-width="1.1"/>
<ellipse cx="766.4" cy="341.1" rx="3" ry="2.2" fill="none" stroke="#e668c6" stroke-width="1.1"/>
<ellipse cx="826.5" cy="373.7" rx="3" ry="2.2" fill="none" stroke="#e668c6" stroke-width="1.1"/>
<ellipse cx="227" cy="406.4" rx="3" ry="2.2" fill="none" stroke="#e668c6" stroke-width="1.1"/>
<ellipse cx="455.5" cy="406.2" rx="3" ry="2.2" fill="none" stroke="#e668c6" stroke-width="1.1"/>
<ellipse cx="726.2" cy="469.3" rx="3" ry="2.2" fill="none" stroke="#e668c6" stroke-width="1.1"/>
<ellipse cx="236.6" cy="517.7" rx="3" ry="2.2" fill="none" stroke="#e668c6" stroke-width="1.1"/>
<ellipse cx="262.2" cy="525" rx="3" ry="2.2" fill="none" stroke="#e668c6" stroke-width="1.1"/>
<ellipse cx="267.2" cy="621.7" rx="3" ry="2.2" fill="none" stroke="#e668c6" stroke-width="1.1"/>
<ellipse cx="508.1" cy="563.3" rx="3" ry="2.2" fill="none" stroke="#e668c6" stroke-width="1.1"/>
<ellipse cx="665.8" cy="558.9" rx="3" ry="2.2" fill="none" stroke="#e668c6" stroke-width="1.1"/>
<ellipse cx="567.4" cy="601.3" rx="3" ry="2.2" fill="none" stroke="#e668c6" stroke-width="1.1"/>
<ellipse cx="606.2" cy="648.3" rx="3" ry="2.2" fill="none" stroke="#e668c6" stroke-width="1.1"/>
<ellipse cx="537.6" cy="463.5" rx="3" ry="2.2" fill="none" stroke="#e668c6" stroke-width="1.1"/><ellipse cx="541.6" cy="463.5" rx="3" ry="2.2" fill="none" stroke="#e668c6" stroke-width="1.1"/>
<ellipse cx="387.7" cy="673.9" rx="3.2" ry="2.2" fill="none" stroke="#e668c6" stroke-width="1.1"/><circle cx="387" cy="673.6" r="0.8" fill="#fff"/><circle cx="389.3" cy="674.6" r="0.8" fill="#fff"/><circle cx="391.2" cy="673.2" r="0.6" fill="#ddd"/>
<rect x="502" y="761.5" width="3" height="3" fill="#00cc00"/><circle cx="553.2" cy="355.1" r="0.8" fill="#fff"/>
<g font-family="'Liberation Sans',sans-serif" font-size="12px" fill="#000" opacity="0.85" stroke="#000" stroke-width="0.2">
<text x="545.7" y="124">N</text>
<text x="279" y="231">NE</text>
<text x="804.3" y="231">NW</text>
<text x="179" y="491">E</text>
<text x="913" y="491">W</text>
<text x="279.7" y="750">SE</text>
<text x="804.6" y="750">SW</text>
<text x="546" y="857">S</text>
</g>
</svg>
<div class="abs" style="left:6px;top:869px;width:1088px;height:18px;background:#000;"></div>
</body></html>
